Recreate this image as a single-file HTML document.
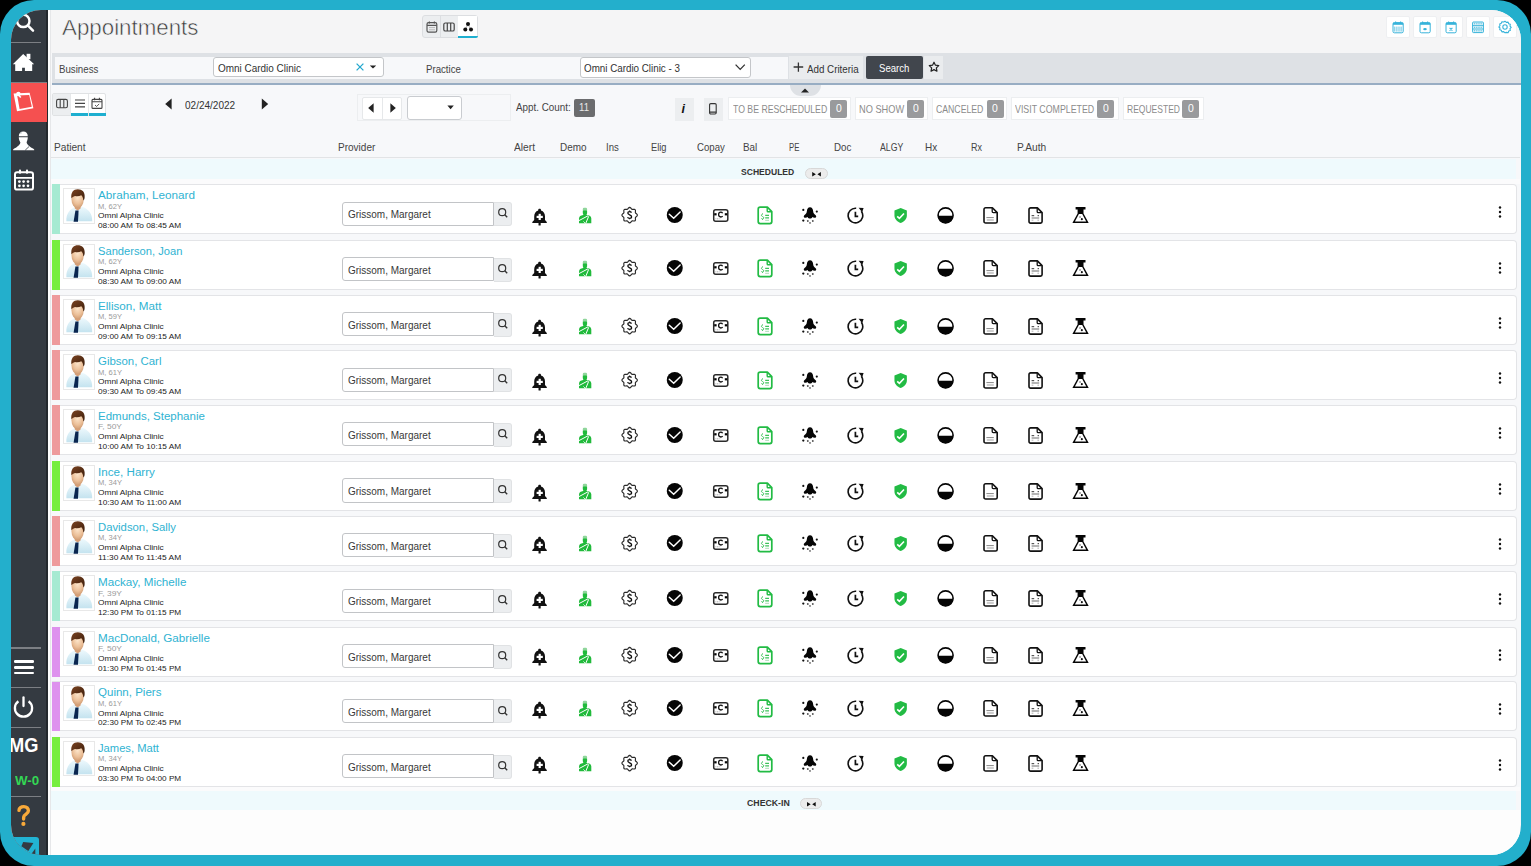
<!DOCTYPE html><html><head><meta charset="utf-8"><style>html,body{margin:0;padding:0}body{width:1531px;height:866px;overflow:hidden;position:relative;background:#000;font-family:"Liberation Sans", sans-serif}</style></head><body><div style="position:absolute;left:0px;top:0px;width:1531px;height:866px;background:#23afcc;border-radius:34px"></div><div style="position:absolute;left:11px;top:10.4px;width:1509.5px;height:845px;border-radius:30px;overflow:hidden;background:#f7f8fa"><div style="position:absolute;left:-11px;top:-10.4px;width:1531px;height:866px"><div style="position:absolute;left:47px;top:0px;width:1484px;height:53px;background:#f5f5f6"></div><div style="position:absolute;left:47px;top:0px;width:3px;height:866px;background:#fdfdfd"></div><div style="position:absolute;left:50.0px;top:0px;width:1px;height:866px;background:#e6e7e9"></div><div style="position:absolute;left:0px;top:0px;width:46.3px;height:866px;background:#343a41"></div><div style="position:absolute;left:46.3px;top:0px;width:1.7px;height:866px;background:#23282d"></div><svg style="position:absolute;left:13px;top:9px" width="24" height="26" viewBox="0 0 24 26"><circle cx="10.3" cy="11.9" r="6.2" fill="none" stroke="#fff" stroke-width="2.5"/><path d="M15 16.6l5 5" stroke="#fff" stroke-width="2.5" stroke-linecap="round"/></svg><div style="position:absolute;left:11px;top:42px;width:30px;height:1.4px;background:#7c7f84"></div><svg style="position:absolute;left:12px;top:53px" width="24" height="19" viewBox="0 0 24 19"><path d="M11.2 .9L22.2 11.3H20.2V17.9H12.9V14.7H10.1V17.9H3.2V11.3H.8z" fill="#fff"/><rect x="14.6" y=".8" width="3.8" height="5.4" fill="#fff"/></svg><div style="position:absolute;left:11px;top:82.2px;width:36px;height:1.2px;background:#7c7f84"></div><div style="position:absolute;left:11px;top:83.2px;width:36px;height:39px;background:#f55050"></div><svg style="position:absolute;left:11px;top:88px" width="26" height="28" viewBox="0 0 26 28"><path d="M2.6 5.6l16-.8 3.8 15.4-16.4 3z" fill="#fff"/><path d="M6.2 7.6l12-.6 2.6 11.8-12.2 2.2z" fill="#f55050"/><circle cx="7.4" cy="6" r="2.2" fill="#fff"/><path d="M7.2 6.6l2.6 3" stroke="#fff" stroke-width="1.6"/></svg><svg style="position:absolute;left:12px;top:131px" width="23" height="21" viewBox="0 0 23 21"><path d="M6.8 5.3C6.8 2.4 8.6.6 11.3.6s4.5 1.8 4.5 4.7z" fill="#fff"/><path d="M6.8 6.3h9c0 2.3-.8 3.7-1.2 5.3.6 3 4.8 5 7.6 6.8v.9H1.1v-.9c2.9-1.8 6.9-3.8 7.3-6.8-.8-1.6-1.6-3-1.6-5.3z" fill="#fff"/><path d="M13.2 19.2l4-3.8" stroke="#343a41" stroke-width=".8"/><path d="M8.4 2.6l1.6-1" stroke="#9aa" stroke-width=".6"/></svg><svg style="position:absolute;left:13px;top:169px" width="22" height="23" viewBox="0 0 22 23"><rect x="2" y="3.2" width="18" height="17.4" rx="2.2" fill="none" stroke="#fff" stroke-width="2"/><path d="M2 8.8h18" stroke="#fff" stroke-width="1.8"/><rect x="6" y=".6" width="2" height="4.2" rx=".8" fill="#fff"/><rect x="13" y=".6" width="2" height="4.2" rx=".8" fill="#fff"/><circle cx="6.4" cy="12.6" r="1.35" fill="#fff"/><circle cx="6.4" cy="16.8" r="1.35" fill="#fff"/><circle cx="10.6" cy="12.6" r="1.35" fill="#fff"/><circle cx="10.6" cy="16.8" r="1.35" fill="#fff"/><circle cx="15.0" cy="12.6" r="1.35" fill="#fff"/><circle cx="15.0" cy="16.8" r="1.35" fill="#fff"/></svg><div style="position:absolute;left:11px;top:647.4px;width:30px;height:1.4px;background:#7c7f84"></div><div style="position:absolute;left:13.5px;top:660.3px;width:20.5px;height:2.3px;background:#fff;border-radius:1.2px"></div><div style="position:absolute;left:13.5px;top:666.3px;width:20.5px;height:2.3px;background:#fff;border-radius:1.2px"></div><div style="position:absolute;left:13.5px;top:672.1px;width:20.5px;height:2.3px;background:#fff;border-radius:1.2px"></div><div style="position:absolute;left:11px;top:687px;width:30px;height:1.4px;background:#7c7f84"></div><svg style="position:absolute;left:12px;top:695px" width="23" height="24" viewBox="0 0 23 24"><path d="M6.4 6.2a8.6 8.6 0 1 0 10.2 0" fill="none" stroke="#fff" stroke-width="2.3"/><path d="M11.5 2.4v8.6" stroke="#fff" stroke-width="2.3" stroke-linecap="round"/></svg><div style="position:absolute;left:11px;top:726.7px;width:30px;height:1.4px;background:#7c7f84"></div><div style="position:absolute;left:9.4px;top:735.92px;font-size:19.6px;line-height:19.6px;color:#fff;font-weight:700;white-space:nowrap;transform:scaleX(0.9312);transform-origin:0 0;">MG</div><div style="position:absolute;left:15.2px;top:773.84px;font-size:13.2px;line-height:13.2px;color:#33d654;font-weight:700;white-space:nowrap;transform:scaleX(1.0112);transform-origin:0 0;">W-0</div><div style="position:absolute;left:11px;top:795.6px;width:30px;height:1.4px;background:#7c7f84"></div><svg style="position:absolute;left:10px;top:800px" width="30" height="30" viewBox="0 0 30 30"><path d="M9 10.4C9 8 11.2 6.6 13.8 6.6 16.6 6.6 18.4 8.4 18.4 10.8 18.4 13.6 15.6 14.2 14.2 15.8 13.6 16.6 13.6 17.6 13.6 19" fill="none" stroke="#f8a93a" stroke-width="3.4" stroke-linecap="round"/><circle cx="13.4" cy="23.9" r="2.1" fill="#f8a93a"/></svg><div style="position:absolute;left:0px;top:837.1px;width:38.5px;height:30px;background:#22b3d3;border-radius:0 3px 0 0"></div><svg style="position:absolute;left:0px;top:830px" width="40" height="36" viewBox="0 0 40 36"><path d="M21.4 16.3L23.2 12 33.4 13.1 28.3 21z" fill="#343a41"/><path d="M31.6 23.7L35.3 18.6V24z" fill="#343a41"/></svg><div style="position:absolute;left:61.8px;top:17.38px;font-size:22.3px;line-height:22.3px;color:#383838;font-weight:400;white-space:nowrap;transform:scaleX(1.0010);transform-origin:0 0;-webkit-text-stroke:0.55px #f5f5f6">Appointments</div><div style="position:absolute;left:422px;top:15.3px;width:55.6px;height:23.2px;background:#eceef0;border:1px solid #dcdee1;box-sizing:border-box;border-radius:3px"></div><div style="position:absolute;left:440.4px;top:16.3px;width:0.8px;height:21.2px;background:#dcdee1"></div><div style="position:absolute;left:458.3px;top:16.3px;width:18.3px;height:19.5px;background:#fff"></div><div style="position:absolute;left:458.3px;top:35.6px;width:19.3px;height:2.8px;background:#1eafd0;border-radius:0 0 3px 0"></div><svg style="position:absolute;left:423.5px;top:19px" width="16" height="16" viewBox="0 0 16 16"><rect x="3" y="3.6" width="9.8" height="9.6" rx="1.6" fill="none" stroke="#555" stroke-width="1.2"/><path d="M3 6.4h9.8" stroke="#555" stroke-width="1.2"/><path d="M5.4 2.6v1.8M10.4 2.6v1.8" stroke="#555" stroke-width="1.2"/><path d="M5 8.6h6M5 10.8h6" stroke="#aaa" stroke-width=".8"/></svg><svg style="position:absolute;left:441.2px;top:19px" width="16" height="16" viewBox="0 0 16 16"><rect x="2.8" y="4" width="10.4" height="8" rx="1.6" fill="none" stroke="#444" stroke-width="1.2"/><path d="M6.3 4v8M9.7 4v8" stroke="#444" stroke-width="1.2"/></svg><svg style="position:absolute;left:459.5px;top:17px" width="16" height="18" viewBox="0 0 16 18"><path d="M8 7L5.3 12.6M8 7l2.7 5.6" stroke="#999" stroke-width=".7"/><circle cx="8" cy="7.1" r="2" fill="#111"/><circle cx="5.3" cy="12.6" r="2" fill="#111"/><circle cx="11" cy="12.6" r="2" fill="#111"/></svg><div style="position:absolute;left:1385.9px;top:15.5px;width:23.799999999999955px;height:22.8px;background:#fff;border:1px solid #eeeff1;box-sizing:border-box;border-radius:2px"></div><div style="position:absolute;left:1412.9px;top:15.5px;width:23.799999999999955px;height:22.8px;background:#fff;border:1px solid #eeeff1;box-sizing:border-box;border-radius:2px"></div><div style="position:absolute;left:1439.9px;top:15.5px;width:22.799999999999955px;height:22.8px;background:#fff;border:1px solid #eeeff1;box-sizing:border-box;border-radius:2px"></div><div style="position:absolute;left:1466.4px;top:15.5px;width:23.299999999999955px;height:22.8px;background:#fff;border:1px solid #eeeff1;box-sizing:border-box;border-radius:2px"></div><div style="position:absolute;left:1492.9px;top:15.5px;width:24.09999999999991px;height:22.8px;background:#fff;border:1px solid #eeeff1;box-sizing:border-box;border-radius:2px"></div><svg style="position:absolute;left:1387.8px;top:17px" width="20" height="20" viewBox="0 0 20 20"><rect x="5" y="5.6" width="10.2" height="10.2" rx="1.4" fill="none" stroke="#37b3da" stroke-width="1"/><rect x="5" y="5.6" width="10.2" height="2.2" fill="#37b3da"/><path d="M7.6 4.4v2.2M12.6 4.4v2.2" stroke="#37b3da" stroke-width="1.1"/><path d="M6.8 9.6v5" stroke="#37b3da" stroke-width=".8"/><path d="M8.9 9.6v5" stroke="#37b3da" stroke-width=".8"/><path d="M11.0 9.6v5" stroke="#37b3da" stroke-width=".8"/><path d="M13.100000000000001 9.6v5" stroke="#37b3da" stroke-width=".8"/></svg><svg style="position:absolute;left:1414.8px;top:17px" width="20" height="20" viewBox="0 0 20 20"><rect x="5" y="5.6" width="10.2" height="10.2" rx="1.4" fill="none" stroke="#37b3da" stroke-width="1"/><rect x="5" y="5.6" width="10.2" height="2.2" fill="#37b3da"/><path d="M7.6 4.4v2.2M12.6 4.4v2.2" stroke="#37b3da" stroke-width="1.1"/><ellipse cx="10" cy="12.2" rx="1.8" ry="1.1" fill="#37b3da"/></svg><svg style="position:absolute;left:1441.3px;top:17px" width="20" height="20" viewBox="0 0 20 20"><rect x="5" y="5.6" width="10.2" height="10.2" rx="1.4" fill="none" stroke="#37b3da" stroke-width="1"/><rect x="5" y="5.6" width="10.2" height="2.2" fill="#37b3da"/><path d="M7.6 4.4v2.2M12.6 4.4v2.2" stroke="#37b3da" stroke-width="1.1"/><path d="M8.6 10.8l2.8 2.8M11.4 10.8l-2.8 2.8" stroke="#37b3da" stroke-width="1.1"/></svg><svg style="position:absolute;left:1468.0px;top:17px" width="20" height="20" viewBox="0 0 20 20"><rect x="4.6" y="5" width="10.8" height="10.6" rx=".8" fill="#e3f4fa" stroke="#37b3da" stroke-width="1"/><path d="M4.6 8.6h10.8M4.6 12h10.8" stroke="#37b3da" stroke-width=".9"/><path d="M6 6.8h8M6 10.3h8M6 13.8h8" stroke="#37b3da" stroke-width=".9" stroke-dasharray="1.2 1"/></svg><svg style="position:absolute;left:1495.0px;top:17px" width="20" height="20" viewBox="0 0 20 20"><path d="M10 4.2l1.3 1.2 1.8-.3.6 1.6 1.6.6-.3 1.8 1.2 1.3-1.2 1.3.3 1.8-1.6.6-.6 1.6-1.8-.3L10 15.8l-1.3-1.2-1.8.3-.6-1.6-1.6-.6.3-1.8L3.8 10l1.2-1.3-.3-1.8 1.6-.6.6-1.6 1.8.3z" fill="none" stroke="#37b3da" stroke-width="1.1" stroke-linejoin="round"/><circle cx="10" cy="10" r="2.2" fill="none" stroke="#37b3da" stroke-width="1.1"/></svg><div style="position:absolute;left:52px;top:53.3px;width:1475px;height:29.8px;background:#dee1e5"></div><div style="position:absolute;left:52px;top:83.0px;width:1475px;height:2.1px;background:#98adc3"></div><div style="position:absolute;left:55px;top:56.6px;width:733.3px;height:22px;background:#f7f8fa"></div><div style="position:absolute;left:59px;top:64.76px;font-size:10.4px;line-height:10.4px;color:#444;font-weight:400;white-space:nowrap;transform:scaleX(0.9336);transform-origin:0 0;">Business</div><div style="position:absolute;left:425.9px;top:64.96px;font-size:10.4px;line-height:10.4px;color:#444;font-weight:400;white-space:nowrap;transform:scaleX(0.9290);transform-origin:0 0;">Practice</div><div style="position:absolute;left:212.7px;top:57.4px;width:171.6px;height:20px;background:#fff;border:1px solid #c4c6c9;border-radius:3px;box-sizing:border-box"></div><div style="position:absolute;left:218px;top:63.20px;font-size:10.6px;line-height:10.6px;color:#333;font-weight:400;white-space:nowrap;transform:scaleX(0.9394);transform-origin:0 0;">Omni Cardio Clinic</div><svg style="position:absolute;left:354px;top:61px" width="12" height="12" viewBox="0 0 12 12"><path d="M2.6 2.6l6.8 6.8M9.4 2.6l-6.8 6.8" stroke="#27a9cf" stroke-width="1.3"/></svg><svg style="position:absolute;left:368px;top:61px" width="10" height="12" viewBox="0 0 10 12"><path d="M1.8 4.4h6.4L5 7.6z" fill="#222"/></svg><div style="position:absolute;left:579.6px;top:57px;width:171px;height:21px;background:#fff;border:1px solid #c4c6c9;border-radius:3px;box-sizing:border-box"></div><div style="position:absolute;left:584px;top:63.40px;font-size:10.6px;line-height:10.6px;color:#333;font-weight:400;white-space:nowrap;transform:scaleX(0.9260);transform-origin:0 0;">Omni Cardio Clinic - 3</div><svg style="position:absolute;left:733px;top:61px" width="14" height="12" viewBox="0 0 14 12"><path d="M2.6 3.6l4.6 4.8 4.6-4.8" fill="none" stroke="#333" stroke-width="1.3"/></svg><div style="position:absolute;left:789.4px;top:56.2px;width:74px;height:22.6px;background:#eaecee"></div><svg style="position:absolute;left:792px;top:61px" width="12" height="12" viewBox="0 0 12 12"><path d="M6.4 1.4v9.4M1.6 6h9.6" stroke="#333" stroke-width="1.3"/></svg><div style="position:absolute;left:806.7px;top:64.96px;font-size:10.4px;line-height:10.4px;color:#333;font-weight:400;white-space:nowrap;transform:scaleX(0.9415);transform-origin:0 0;">Add Criteria</div><div style="position:absolute;left:866px;top:56px;width:57px;height:23.2px;background:#41464d;border-radius:2px"></div><div style="position:absolute;left:879px;top:64.36px;font-size:10.4px;line-height:10.4px;color:#fff;font-weight:400;white-space:nowrap;transform:scaleX(0.9225);transform-origin:0 0;">Search</div><div style="position:absolute;left:924.4px;top:56.2px;width:19px;height:22.6px;background:#eaecee"></div><svg style="position:absolute;left:927.9px;top:60.8px" width="12" height="12" viewBox="0 0 12 12"><path d="M6 1.2l1.45 3 3.3.4-2.4 2.3.6 3.3L6 8.6l-2.95 1.6.6-3.3L1.25 4.6l3.3-.4z" fill="none" stroke="#222" stroke-width="1.2" stroke-linejoin="round"/></svg><div style="position:absolute;left:790px;top:85px;width:31px;height:10.5px;background:#dee1e5;border-radius:0 0 12px 12px"></div><svg style="position:absolute;left:799px;top:85px" width="12" height="10" viewBox="0 0 12 10"><path d="M2 7.4h8L6 3.4z" fill="#222"/></svg><div style="position:absolute;left:52px;top:92.6px;width:54px;height:23.4px;background:#fff;border:1px solid #e0e2e4;box-sizing:border-box;border-radius:2px"></div><div style="position:absolute;left:53px;top:93.6px;width:17.3px;height:21.4px;background:#eceef0"></div><div style="position:absolute;left:70.3px;top:93.6px;width:0.8px;height:21.4px;background:#e6e8ea"></div><div style="position:absolute;left:88.0px;top:93.6px;width:0.8px;height:21.4px;background:#e6e8ea"></div><div style="position:absolute;left:70.9px;top:113.4px;width:17.1px;height:2.6px;background:#1eafd0"></div><div style="position:absolute;left:88.8px;top:113.4px;width:17.1px;height:2.6px;background:#1eafd0"></div><svg style="position:absolute;left:53.5px;top:95px" width="16" height="16" viewBox="0 0 16 16"><rect x="2.6" y="4.4" width="10.8" height="8.4" rx="1.6" fill="none" stroke="#444" stroke-width="1.1"/><path d="M6.2 4.4v8.4M9.8 4.4v8.4" stroke="#444" stroke-width="1.1"/></svg><svg style="position:absolute;left:71.5px;top:95px" width="16" height="16" viewBox="0 0 16 16"><path d="M3 5h10M3 8.4h10M3 11.8h10" stroke="#444" stroke-width="1.2"/></svg><svg style="position:absolute;left:89px;top:95px" width="16" height="16" viewBox="0 0 16 16"><rect x="3" y="4.4" width="10" height="9" rx="1" fill="none" stroke="#444" stroke-width="1.1"/><path d="M3 6.8h10M5.6 2.8v2.4M10.4 2.8v2.4" stroke="#444" stroke-width="1.1"/><path d="M6 10l1.6 1.5 2.6-2.6" fill="none" stroke="#444" stroke-width=".9"/></svg><svg style="position:absolute;left:163px;top:97px" width="10" height="14" viewBox="0 0 10 14"><path d="M8.6 1.6v10.8L2.2 7z" fill="#222"/></svg><div style="position:absolute;left:184.6px;top:99.80px;font-size:10.6px;line-height:10.6px;color:#333;font-weight:400;white-space:nowrap;transform:scaleX(0.9462);transform-origin:0 0;">02/24/2022</div><svg style="position:absolute;left:260px;top:97px" width="10" height="14" viewBox="0 0 10 14"><path d="M1.8 1.6v10.8L8.2 7z" fill="#222"/></svg><div style="position:absolute;left:356.7px;top:94.2px;width:154.1px;height:27px;background:#f7f8fa;border:1px solid #eceef0;box-sizing:border-box"></div><div style="position:absolute;left:361.5px;top:96.5px;width:40.5px;height:23px;background:#fff;border:1px solid #e6e8ea;box-sizing:border-box;border-radius:2px"></div><div style="position:absolute;left:381.6px;top:96.5px;width:1px;height:23px;background:#e6e8ea"></div><svg style="position:absolute;left:366px;top:101px" width="10" height="14" viewBox="0 0 10 14"><path d="M7.6 2.2v9.6L2.2 7z" fill="#222"/></svg><svg style="position:absolute;left:387.5px;top:101px" width="10" height="14" viewBox="0 0 10 14"><path d="M2.4 2.2v9.6L7.8 7z" fill="#222"/></svg><div style="position:absolute;left:406.8px;top:96.2px;width:55.4px;height:23.4px;background:#fff;border:1px solid #c9ccd0;border-radius:3px;box-sizing:border-box"></div><svg style="position:absolute;left:445px;top:102px" width="12" height="10" viewBox="0 0 12 10"><path d="M2.4 3.6h6.4L5.6 7.2z" fill="#222"/></svg><div style="position:absolute;left:515.8px;top:102.76px;font-size:10.4px;line-height:10.4px;color:#444;font-weight:400;white-space:nowrap;transform:scaleX(0.9461);transform-origin:0 0;">Appt. Count:</div><div style="position:absolute;left:573.6px;top:99px;width:21.4px;height:17.6px;background:#6b6c6e;border-radius:2px"></div><div style="position:absolute;left:579.2px;top:103.36px;font-size:10.4px;line-height:10.4px;color:#e8e8e8;font-weight:400;white-space:nowrap;transform:scaleX(0.9262);transform-origin:0 0;">11</div><div style="position:absolute;left:675.3px;top:97.5px;width:18.4px;height:23.5px;background:#eceef0"></div><div style="position:absolute;left:681.4px;top:103.02px;font-size:12.5px;line-height:12.5px;color:#111;font-weight:700;white-space:nowrap;font-style:italic;font-family:"Liberation Serif",serif">i</div><div style="position:absolute;left:703.5px;top:97.5px;width:19px;height:23.5px;background:#eceef0"></div><svg style="position:absolute;left:707px;top:101px" width="12" height="16" viewBox="0 0 12 16"><rect x="2.6" y="2.6" width="6.6" height="10.4" rx="1.2" fill="none" stroke="#333" stroke-width="1.1"/><path d="M2.6 11.2h6.6" stroke="#333" stroke-width="1.2"/></svg><div style="position:absolute;left:727.6px;top:96.8px;width:123.39999999999998px;height:22.8px;background:#fff;border:1px solid #eceef0;box-sizing:border-box"></div><div style="position:absolute;left:732.5px;top:103.93px;font-size:10.8px;line-height:10.8px;color:#8c8c8c;font-weight:400;white-space:nowrap;transform:scaleX(0.8063);transform-origin:0 0;">TO BE RESCHEDULED</div><div style="position:absolute;left:830.0px;top:99.8px;width:17px;height:17.8px;background:#999a9c;border-radius:2px"></div><div style="position:absolute;left:835.6px;top:103.96px;font-size:10.4px;line-height:10.4px;color:#fff;font-weight:400;white-space:nowrap;transform:scaleX(1.0027);transform-origin:0 0;">0</div><div style="position:absolute;left:854.5px;top:96.8px;width:73.5px;height:22.8px;background:#fff;border:1px solid #eceef0;box-sizing:border-box"></div><div style="position:absolute;left:859.0px;top:103.93px;font-size:10.8px;line-height:10.8px;color:#8c8c8c;font-weight:400;white-space:nowrap;transform:scaleX(0.8542);transform-origin:0 0;">NO SHOW</div><div style="position:absolute;left:907.0px;top:99.8px;width:17px;height:17.8px;background:#999a9c;border-radius:2px"></div><div style="position:absolute;left:912.6px;top:103.96px;font-size:10.4px;line-height:10.4px;color:#fff;font-weight:400;white-space:nowrap;transform:scaleX(1.0027);transform-origin:0 0;">0</div><div style="position:absolute;left:931.7px;top:96.8px;width:75.79999999999995px;height:22.8px;background:#fff;border:1px solid #eceef0;box-sizing:border-box"></div><div style="position:absolute;left:936.1px;top:103.93px;font-size:10.8px;line-height:10.8px;color:#8c8c8c;font-weight:400;white-space:nowrap;transform:scaleX(0.8059);transform-origin:0 0;">CANCELED</div><div style="position:absolute;left:986.7px;top:99.8px;width:17px;height:17.8px;background:#999a9c;border-radius:2px"></div><div style="position:absolute;left:992.3000000000001px;top:103.96px;font-size:10.4px;line-height:10.4px;color:#fff;font-weight:400;white-space:nowrap;transform:scaleX(1.0027);transform-origin:0 0;">0</div><div style="position:absolute;left:1010.5px;top:96.8px;width:108.40000000000009px;height:22.8px;background:#fff;border:1px solid #eceef0;box-sizing:border-box"></div><div style="position:absolute;left:1015.1px;top:103.93px;font-size:10.8px;line-height:10.8px;color:#8c8c8c;font-weight:400;white-space:nowrap;transform:scaleX(0.8163);transform-origin:0 0;">VISIT COMPLETED</div><div style="position:absolute;left:1097.1px;top:99.8px;width:17px;height:17.8px;background:#999a9c;border-radius:2px"></div><div style="position:absolute;left:1102.6999999999998px;top:103.96px;font-size:10.4px;line-height:10.4px;color:#fff;font-weight:400;white-space:nowrap;transform:scaleX(1.0027);transform-origin:0 0;">0</div><div style="position:absolute;left:1122.7px;top:96.8px;width:81.39999999999986px;height:22.8px;background:#fff;border:1px solid #eceef0;box-sizing:border-box"></div><div style="position:absolute;left:1126.5px;top:103.93px;font-size:10.8px;line-height:10.8px;color:#8c8c8c;font-weight:400;white-space:nowrap;transform:scaleX(0.7885);transform-origin:0 0;">REQUESTED</div><div style="position:absolute;left:1182.4px;top:99.8px;width:17px;height:17.8px;background:#999a9c;border-radius:2px"></div><div style="position:absolute;left:1188.0px;top:103.96px;font-size:10.4px;line-height:10.4px;color:#fff;font-weight:400;white-space:nowrap;transform:scaleX(1.0027);transform-origin:0 0;">0</div><div style="position:absolute;left:51.3px;top:157px;width:1469px;height:1px;background:#e2e4e6"></div><div style="position:absolute;left:54.4px;top:142.30px;font-size:10.6px;line-height:10.6px;color:#444;font-weight:400;white-space:nowrap;transform:scaleX(0.9575);transform-origin:0 0;">Patient</div><div style="position:absolute;left:337.7px;top:142.30px;font-size:10.6px;line-height:10.6px;color:#444;font-weight:400;white-space:nowrap;transform:scaleX(0.9450);transform-origin:0 0;">Provider</div><div style="position:absolute;left:514.1px;top:142.30px;font-size:10.6px;line-height:10.6px;color:#444;font-weight:400;white-space:nowrap;transform:scaleX(0.9681);transform-origin:0 0;">Alert</div><div style="position:absolute;left:559.9px;top:142.30px;font-size:10.6px;line-height:10.6px;color:#444;font-weight:400;white-space:nowrap;transform:scaleX(0.9372);transform-origin:0 0;">Demo</div><div style="position:absolute;left:605.6px;top:142.30px;font-size:10.6px;line-height:10.6px;color:#444;font-weight:400;white-space:nowrap;transform:scaleX(0.9052);transform-origin:0 0;">Ins</div><div style="position:absolute;left:651.3px;top:142.30px;font-size:10.6px;line-height:10.6px;color:#444;font-weight:400;white-space:nowrap;transform:scaleX(0.8769);transform-origin:0 0;">Elig</div><div style="position:absolute;left:696.7px;top:142.30px;font-size:10.6px;line-height:10.6px;color:#444;font-weight:400;white-space:nowrap;transform:scaleX(0.9073);transform-origin:0 0;">Copay</div><div style="position:absolute;left:742.7px;top:142.30px;font-size:10.6px;line-height:10.6px;color:#444;font-weight:400;white-space:nowrap;transform:scaleX(0.9334);transform-origin:0 0;">Bal</div><div style="position:absolute;left:788.8px;top:142.30px;font-size:10.6px;line-height:10.6px;color:#444;font-weight:400;white-space:nowrap;transform:scaleX(0.7354);transform-origin:0 0;">PE</div><div style="position:absolute;left:834.0px;top:142.30px;font-size:10.6px;line-height:10.6px;color:#444;font-weight:400;white-space:nowrap;transform:scaleX(0.9177);transform-origin:0 0;">Doc</div><div style="position:absolute;left:879.7px;top:142.30px;font-size:10.6px;line-height:10.6px;color:#444;font-weight:400;white-space:nowrap;transform:scaleX(0.8203);transform-origin:0 0;">ALGY</div><div style="position:absolute;left:925.4px;top:142.30px;font-size:10.6px;line-height:10.6px;color:#444;font-weight:400;white-space:nowrap;transform:scaleX(0.9417);transform-origin:0 0;">Hx</div><div style="position:absolute;left:971.1px;top:142.30px;font-size:10.6px;line-height:10.6px;color:#444;font-weight:400;white-space:nowrap;transform:scaleX(0.8491);transform-origin:0 0;">Rx</div><div style="position:absolute;left:1016.8px;top:142.30px;font-size:10.6px;line-height:10.6px;color:#444;font-weight:400;white-space:nowrap;transform:scaleX(0.9621);transform-origin:0 0;">P.Auth</div><div style="position:absolute;left:51.3px;top:158.6px;width:1464.7px;height:20px;background:#effafd"></div><div style="position:absolute;left:51.3px;top:178.6px;width:1469px;height:5.6px;background:#fbfbfc"></div><div style="position:absolute;left:741.4px;top:167.23px;font-size:9.6px;line-height:9.6px;color:#333;font-weight:700;white-space:nowrap;transform:scaleX(0.8922);transform-origin:0 0;">SCHEDULED</div><div style="position:absolute;left:805.2px;top:167.5px;width:22.4px;height:11px;background:#ececec;border:1px solid #d8d8d8;border-radius:6px;box-sizing:border-box"></div><svg style="position:absolute;left:805.2px;top:167.5px" width="22.4" height="11" viewBox="0 0 22.4 11"><path d="M7.2 4v4.4L10.9 6.2zM15.9 4v4.4L12.4 6.2z" fill="#111"/></svg><div style="position:absolute;left:52px;top:184.1px;width:1464.6px;height:50.1px;background:#fff;border:1.5px solid #e3e4e7;border-left:none;border-radius:0 4px 4px 0;box-sizing:border-box"></div><div style="position:absolute;left:52px;top:184.4px;width:8px;height:49.5px;background:#a6ead2"></div><div style="position:absolute;left:63.2px;top:188.20000000000002px;width:31.6px;height:35.5px;border:1px solid #e8e8e8;box-sizing:border-box;background:#fff"></div><svg style="position:absolute;left:64.60000000000001px;top:189.20000000000002px" width="29" height="34" viewBox="0 0 29 34"><defs><radialGradient id="sk" cx="0.5" cy="0.35" r="0.75"><stop offset="0" stop-color="#fde6cc"/><stop offset="0.55" stop-color="#ebbf98"/><stop offset="1" stop-color="#c48c62"/></radialGradient><linearGradient id="sh" x1="0" y1="0" x2="0" y2="1"><stop offset="0" stop-color="#eef9fd"/><stop offset="1" stop-color="#c4e3ef"/></linearGradient><linearGradient id="hr" x1="0" y1="0" x2="1" y2="1"><stop offset="0" stop-color="#7a4322"/><stop offset="1" stop-color="#3c1d0a"/></linearGradient></defs><path d="M1.4 32.2c-.4-7.4 3.4-12.2 9.2-14.4l3 1 3.4-1c6.2 2 10.6 6.6 10.2 14.4z" fill="url(#sh)"/><path d="M9.8 15.6h5.8v4l-2.9 2-2.9-2z" fill="#d7a078"/><ellipse cx="12.6" cy="10.6" rx="6.1" ry="8.6" fill="url(#sk)"/><path d="M6.4 9.6C5.6 3.4 8.4.3 12.8.3c4.4 0 7.4 2.8 6.8 8.4-.2 1.4-.6 2.2-1.2 2.8-.2-2.6-1-4.4-2.2-5.2-1.8 1-4.2 1.2-6.2.6-1.6.4-3 1.4-3.6 2.7z" fill="url(#hr)"/><path d="M10.4 21.6h3.2l-.6 11.2H8.6z" fill="#0a2650"/></svg><div style="position:absolute;left:98px;top:188.98px;font-size:11.7px;line-height:11.7px;color:#2fb3d2;font-weight:400;white-space:nowrap;transform:scaleX(1.0009);transform-origin:0 0;">Abraham, Leonard</div><div style="position:absolute;left:98px;top:202.55px;font-size:7.4px;line-height:7.4px;color:#9a9a9a;font-weight:400;white-space:nowrap;transform:scaleX(1.0237);transform-origin:0 0;">M, 62Y</div><div style="position:absolute;left:98px;top:212.49px;font-size:7.6px;line-height:7.6px;color:#222;font-weight:400;white-space:nowrap;transform:scaleX(1.0970);transform-origin:0 0;">Omni Alpha Clinic</div><div style="position:absolute;left:98px;top:221.94px;font-size:7.9px;line-height:7.9px;color:#222;font-weight:400;white-space:nowrap;transform:scaleX(1.0498);transform-origin:0 0;">08:00 AM To 08:45 AM</div><div style="position:absolute;left:342.4px;top:201.5px;width:152px;height:24.2px;background:#fff;border:1px solid #c2c4c7;border-radius:3px 0 0 3px;box-sizing:border-box"></div><div style="position:absolute;left:494.3px;top:201.9px;width:18px;height:24.4px;background:#eceef0;border:1px solid #e0e2e4;border-left:none;border-radius:0 3px 3px 0;box-sizing:border-box"></div><div style="position:absolute;left:347.6px;top:209.43px;font-size:10.8px;line-height:10.8px;color:#383838;font-weight:400;white-space:nowrap;transform:scaleX(0.9249);transform-origin:0 0;">Grissom, Margaret</div><svg style="position:absolute;left:497px;top:207.3px" width="12" height="12" viewBox="0 0 12 12"><circle cx="5.2" cy="5.2" r="3.5" fill="none" stroke="#333" stroke-width="1.2"/><path d="M7.8 7.8l2.4 2.4" stroke="#333" stroke-width="1.4"/></svg><svg style="position:absolute;left:531.0px;top:206.05px" width="18" height="20" viewBox="0 0 18 20"><path d="M8.6 2.7c.8 0 1.4.5 1.4 1.2v.6c2.6.7 4 3 4 6v3.4l1.8 2.2V17H1.3v-.9l1.9-2.2v-3.4c0-3 1.4-5.3 4-6v-.6c0-.7.6-1.2 1.4-1.2z" fill="#111"/><rect x="7.6" y="7.8" width="2.2" height="6.2" fill="#fff"/><rect x="5.6" y="9.8" width="6.2" height="2.2" fill="#fff"/><rect x="7.5" y="17" width="2.2" height="2.5" rx=".6" fill="#111"/></svg><svg style="position:absolute;left:576.08px;top:206.05px" width="18" height="20" viewBox="0 0 18 20"><rect x="6.8" y="1.8" width="4.3" height="3.3" rx="1.3" fill="#8fd69b"/><path d="M6.8 4.6h4.3v2.3c0 1-.4 1.7-.9 2.3H7.7c-.5-.6-.9-1.3-.9-2.3z" fill="#20ba3b"/><path d="M7.2 9c-2.6.3-4.2 1.5-4.2 3.5v4.7h12.3v-4.7c0-2-1.6-3.2-4.2-3.5z" fill="#20ba3b"/><path d="M2.8 14.7l9.2-4.9" stroke="#fff" stroke-width="1"/><path d="M12.7 10.3l-3 7.2" stroke="#fff" stroke-width="1"/><path d="M7.4 15.4l2 2" stroke="#fff" stroke-width=".8"/></svg><svg style="position:absolute;left:621.16px;top:206.05px" width="18" height="20" viewBox="0 0 18 20"><polygon points="8.64,1.40 9.38,1.66 10.01,2.28 10.52,2.96 11.03,3.38 11.69,3.44 12.53,3.33 13.42,3.33 14.12,3.67 14.46,4.37 14.46,5.26 14.35,6.10 14.41,6.76 14.83,7.27 15.51,7.78 16.13,8.41 16.39,9.15 16.13,9.89 15.51,10.52 14.83,11.03 14.41,11.54 14.35,12.20 14.46,13.04 14.46,13.93 14.12,14.63 13.42,14.97 12.53,14.97 11.69,14.86 11.03,14.92 10.52,15.34 10.01,16.02 9.38,16.64 8.64,16.90 7.90,16.64 7.27,16.02 6.76,15.34 6.25,14.92 5.59,14.86 4.75,14.97 3.86,14.97 3.16,14.63 2.82,13.93 2.82,13.04 2.93,12.20 2.87,11.54 2.45,11.03 1.77,10.52 1.15,9.89 0.89,9.15 1.15,8.41 1.77,7.78 2.45,7.27 2.87,6.76 2.93,6.10 2.82,5.26 2.82,4.37 3.16,3.67 3.86,3.33 4.75,3.33 5.59,3.44 6.25,3.38 6.76,2.96 7.27,2.28 7.90,1.66" fill="none" stroke="#2a2a2a" stroke-width="1.15" stroke-linejoin="round"/><path d="M10.5 6.6c-.4-.7-1-1-1.9-1-1 0-1.8.6-1.8 1.5 0 2 3.8 1.4 3.8 3.6 0 1-.9 1.6-2 1.6-1 0-1.7-.4-2.1-1.1" fill="none" stroke="#111" stroke-width="1.3"/><path d="M8.6 4.6v1M8.6 12.3v1" stroke="#111" stroke-width="1.1"/></svg><svg style="position:absolute;left:666.24px;top:206.05px" width="18" height="20" viewBox="0 0 18 20"><circle cx="8.76" cy="9" r="8" fill="#050505"/><path d="M3.3 8.2l4.4 4.1 6.4-6.3" stroke="#fff" stroke-width="1.5" fill="none" stroke-linecap="round" stroke-linejoin="miter"/></svg><svg style="position:absolute;left:711.32px;top:206.05px" width="18" height="20" viewBox="0 0 18 20"><rect x="2.7" y="3.7" width="14.1" height="11.5" rx="2" fill="none" stroke="#2b2b2b" stroke-width="1.5"/><rect x="3.2" y="7.2" width="2.4" height="2.2" fill="#050505"/><rect x="13.8" y="7.2" width="2.4" height="2.2" fill="#050505"/><path d="M11.6 7.2c-.4-.7-1-1-1.8-1-1.3 0-2.2 1-2.2 2.4s.9 2.4 2.2 2.4c.8 0 1.4-.3 1.8-1" fill="none" stroke="#111" stroke-width="1.3"/><path d="M4.4 12.8h5" stroke="#9a9a9a" stroke-width=".8" stroke-dasharray="1 .6"/></svg><svg style="position:absolute;left:756.4px;top:206.05px" width="18" height="20" viewBox="0 0 18 20"><path d="M4.2 1.2h7.2l4.4 4.4v10c0 1.1-.9 2-2 2H4.2c-1.1 0-2-.9-2-2V3.2c0-1.1.9-2 2-2z" fill="none" stroke="#22bb44" stroke-width="1.7" stroke-linejoin="round"/><path d="M11.2 1.6v3.4c0 .5.3.8.8.8h3.4" fill="none" stroke="#22bb44" stroke-width="1.4"/><path d="M9.2 9.4h3.8M9.2 11.9h3.8" stroke="#3cc25a" stroke-width="1.1"/><path d="M9.2 14.3h3.8" stroke="#a9dcb4" stroke-width="1"/><path d="M6.6 8.2c-.6 0-1.2.4-1.2 1.1 0 1.4 2.4 1 2.4 2.6 0 .7-.6 1.1-1.2 1.1s-1.1-.3-1.3-.8M6.5 7.4v.8M6.5 13v.9" fill="none" stroke="#3cc25a" stroke-width=".9"/></svg><svg style="position:absolute;left:801.48px;top:206.05px" width="18" height="20" viewBox="0 0 18 20"><path d="M9 1.3C11 1.3 12 3.2 12.2 5.6 12.4 7.4 13.2 8.2 14.4 8.9 15.6 9.6 15.6 11.6 14 11.7 12.8 11.8 12 11.4 11.4 11 11 12.2 10 12.5 9 12.5S7 12.2 6.6 11C6 11.4 5.2 11.8 4 11.7 2.4 11.6 2.4 9.6 3.6 8.9 4.8 8.2 5.6 7.4 5.8 5.6 6 3.2 7 1.3 9 1.3z" fill="#050505"/><circle cx="2.3" cy="3.95" r="1.1" fill="#111"/><circle cx="15.8" cy="5.55" r="1.1" fill="#111"/><circle cx="2.3" cy="14.55" r="1.15" fill="#111"/><circle cx="6.8" cy="14.95" r=".95" fill="#555"/><circle cx="11.8" cy="14.95" r=".95" fill="#555"/><circle cx="9" cy="16.95" r=".9" fill="#666"/></svg><svg style="position:absolute;left:846.56px;top:206.05px" width="18" height="20" viewBox="0 0 18 20"><path d="M14.3 5.2A7.3 7.3 0 1 1 9.2 2.3" fill="none" stroke="#111" stroke-width="1.6"/><path d="M11.6 1.8l5 .1-1.4 4.4z" fill="#111"/><path d="M8.4 5.8v4.6h2.8" fill="none" stroke="#111" stroke-width="1.7"/></svg><svg style="position:absolute;left:891.64px;top:206.05px" width="18" height="20" viewBox="0 0 18 20"><path d="M8.66 2.1l6.2 2.3v4.8c0 3.8-2.6 6.6-6.2 7.8-3.6-1.2-6.2-4-6.2-7.8V4.4z" fill="#22bb44"/><path d="M5.2 10.3l2.2 2.1 4.6-4.9" stroke="#fff" stroke-width="1.6" fill="none"/></svg><svg style="position:absolute;left:936.72px;top:206.05px" width="18" height="20" viewBox="0 0 18 20"><circle cx="8.58" cy="9.35" r="7.5" fill="#fff" stroke="#050505" stroke-width="1.6"/><path d="M1.08 9.65h15a7.5 7.5 0 0 1-15 0z" fill="#050505"/></svg><svg style="position:absolute;left:981.8px;top:206.05px" width="18" height="20" viewBox="0 0 18 20"><path d="M3.6 1.8h6.8l4.8 4.8v8.8c0 .9-.7 1.6-1.6 1.6H3.6c-.9 0-1.6-.7-1.6-1.6V3.4c0-.9.7-1.6 1.6-1.6z" fill="none" stroke="#111" stroke-width="1.6" stroke-linejoin="round"/><path d="M10.2 2v3.6c0 .6.4 1 1 1h3.8" fill="none" stroke="#111" stroke-width="1.3"/><path d="M4.4 11.6h7.4" stroke="#888" stroke-width="1"/><path d="M4.8 14h7" stroke="#bbb" stroke-width="1.4"/></svg><svg style="position:absolute;left:1026.88px;top:206.05px" width="18" height="20" viewBox="0 0 18 20"><path d="M3.6 1.9h6.8l4.7 4.7v8.9c0 .9-.7 1.6-1.6 1.6H3.6c-.9 0-1.6-.7-1.6-1.6V3.5c0-.9.7-1.6 1.6-1.6z" fill="none" stroke="#111" stroke-width="1.6" stroke-linejoin="round"/><path d="M10.2 2.1v3.6c0 .6.4 1 1 1h3.7" fill="none" stroke="#111" stroke-width="1.3"/><path d="M4.6 9.7h2.6M10.6 9.7h1.4" stroke="#333" stroke-width="1"/><path d="M4.6 12h7.6" stroke="#777" stroke-width="1.1"/><path d="M4.6 14.2h1.8M10.4 14.2h1.6" stroke="#aaa" stroke-width=".9"/></svg><svg style="position:absolute;left:1071.96px;top:206.05px" width="18" height="20" viewBox="0 0 18 20"><path d="M3.6 1h9.9v2.4h-2v4l5.2 9.6H0.4l5.2-9.6v-4h-2z" fill="#050505"/><path d="M6.9 7.9L2.9 15.5h11.3l-4-7.6z" fill="#fff"/><circle cx="8.04" cy="10.95" r=".8" fill="#555"/><circle cx="9.84" cy="13.15" r="1.05" fill="#111"/></svg><svg style="position:absolute;left:1496.8px;top:204.95000000000002px" width="6" height="14" viewBox="0 0 6 14"><circle cx="3" cy="2.55" r="1.2" fill="#111"/><circle cx="3" cy="7" r="1.2" fill="#111"/><circle cx="3" cy="11.45" r="1.2" fill="#111"/></svg><div style="position:absolute;left:52px;top:239.7px;width:1464.6px;height:50.1px;background:#fff;border:1.5px solid #e3e4e7;border-left:none;border-radius:0 4px 4px 0;box-sizing:border-box"></div><div style="position:absolute;left:52px;top:240.0px;width:8px;height:49.5px;background:#76ee3e"></div><div style="position:absolute;left:63.2px;top:243.8px;width:31.6px;height:35.5px;border:1px solid #e8e8e8;box-sizing:border-box;background:#fff"></div><svg style="position:absolute;left:64.60000000000001px;top:244.8px" width="29" height="34" viewBox="0 0 29 34"><defs><radialGradient id="sk" cx="0.5" cy="0.35" r="0.75"><stop offset="0" stop-color="#fde6cc"/><stop offset="0.55" stop-color="#ebbf98"/><stop offset="1" stop-color="#c48c62"/></radialGradient><linearGradient id="sh" x1="0" y1="0" x2="0" y2="1"><stop offset="0" stop-color="#eef9fd"/><stop offset="1" stop-color="#c4e3ef"/></linearGradient><linearGradient id="hr" x1="0" y1="0" x2="1" y2="1"><stop offset="0" stop-color="#7a4322"/><stop offset="1" stop-color="#3c1d0a"/></linearGradient></defs><path d="M1.4 32.2c-.4-7.4 3.4-12.2 9.2-14.4l3 1 3.4-1c6.2 2 10.6 6.6 10.2 14.4z" fill="url(#sh)"/><path d="M9.8 15.6h5.8v4l-2.9 2-2.9-2z" fill="#d7a078"/><ellipse cx="12.6" cy="10.6" rx="6.1" ry="8.6" fill="url(#sk)"/><path d="M6.4 9.6C5.6 3.4 8.4.3 12.8.3c4.4 0 7.4 2.8 6.8 8.4-.2 1.4-.6 2.2-1.2 2.8-.2-2.6-1-4.4-2.2-5.2-1.8 1-4.2 1.2-6.2.6-1.6.4-3 1.4-3.6 2.7z" fill="url(#hr)"/><path d="M10.4 21.6h3.2l-.6 11.2H8.6z" fill="#0a2650"/></svg><div style="position:absolute;left:98px;top:244.58px;font-size:11.7px;line-height:11.7px;color:#2fb3d2;font-weight:400;white-space:nowrap;transform:scaleX(0.9552);transform-origin:0 0;">Sanderson, Joan</div><div style="position:absolute;left:98px;top:258.15px;font-size:7.4px;line-height:7.4px;color:#9a9a9a;font-weight:400;white-space:nowrap;transform:scaleX(1.0237);transform-origin:0 0;">M, 62Y</div><div style="position:absolute;left:98px;top:268.09px;font-size:7.6px;line-height:7.6px;color:#222;font-weight:400;white-space:nowrap;transform:scaleX(1.0970);transform-origin:0 0;">Omni Alpha Clinic</div><div style="position:absolute;left:98px;top:277.54px;font-size:7.9px;line-height:7.9px;color:#222;font-weight:400;white-space:nowrap;transform:scaleX(1.0498);transform-origin:0 0;">08:30 AM To 09:00 AM</div><div style="position:absolute;left:342.4px;top:257.1px;width:152px;height:24.2px;background:#fff;border:1px solid #c2c4c7;border-radius:3px 0 0 3px;box-sizing:border-box"></div><div style="position:absolute;left:494.3px;top:257.5px;width:18px;height:24.4px;background:#eceef0;border:1px solid #e0e2e4;border-left:none;border-radius:0 3px 3px 0;box-sizing:border-box"></div><div style="position:absolute;left:347.6px;top:265.03px;font-size:10.8px;line-height:10.8px;color:#383838;font-weight:400;white-space:nowrap;transform:scaleX(0.9249);transform-origin:0 0;">Grissom, Margaret</div><svg style="position:absolute;left:497px;top:262.90000000000003px" width="12" height="12" viewBox="0 0 12 12"><circle cx="5.2" cy="5.2" r="3.5" fill="none" stroke="#333" stroke-width="1.2"/><path d="M7.8 7.8l2.4 2.4" stroke="#333" stroke-width="1.4"/></svg><svg style="position:absolute;left:531.0px;top:258.8px" width="18" height="20" viewBox="0 0 18 20"><path d="M8.6 2.7c.8 0 1.4.5 1.4 1.2v.6c2.6.7 4 3 4 6v3.4l1.8 2.2V17H1.3v-.9l1.9-2.2v-3.4c0-3 1.4-5.3 4-6v-.6c0-.7.6-1.2 1.4-1.2z" fill="#111"/><rect x="7.6" y="7.8" width="2.2" height="6.2" fill="#fff"/><rect x="5.6" y="9.8" width="6.2" height="2.2" fill="#fff"/><rect x="7.5" y="17" width="2.2" height="2.5" rx=".6" fill="#111"/></svg><svg style="position:absolute;left:576.08px;top:258.8px" width="18" height="20" viewBox="0 0 18 20"><rect x="6.8" y="1.8" width="4.3" height="3.3" rx="1.3" fill="#8fd69b"/><path d="M6.8 4.6h4.3v2.3c0 1-.4 1.7-.9 2.3H7.7c-.5-.6-.9-1.3-.9-2.3z" fill="#20ba3b"/><path d="M7.2 9c-2.6.3-4.2 1.5-4.2 3.5v4.7h12.3v-4.7c0-2-1.6-3.2-4.2-3.5z" fill="#20ba3b"/><path d="M2.8 14.7l9.2-4.9" stroke="#fff" stroke-width="1"/><path d="M12.7 10.3l-3 7.2" stroke="#fff" stroke-width="1"/><path d="M7.4 15.4l2 2" stroke="#fff" stroke-width=".8"/></svg><svg style="position:absolute;left:621.16px;top:258.8px" width="18" height="20" viewBox="0 0 18 20"><polygon points="8.64,1.40 9.38,1.66 10.01,2.28 10.52,2.96 11.03,3.38 11.69,3.44 12.53,3.33 13.42,3.33 14.12,3.67 14.46,4.37 14.46,5.26 14.35,6.10 14.41,6.76 14.83,7.27 15.51,7.78 16.13,8.41 16.39,9.15 16.13,9.89 15.51,10.52 14.83,11.03 14.41,11.54 14.35,12.20 14.46,13.04 14.46,13.93 14.12,14.63 13.42,14.97 12.53,14.97 11.69,14.86 11.03,14.92 10.52,15.34 10.01,16.02 9.38,16.64 8.64,16.90 7.90,16.64 7.27,16.02 6.76,15.34 6.25,14.92 5.59,14.86 4.75,14.97 3.86,14.97 3.16,14.63 2.82,13.93 2.82,13.04 2.93,12.20 2.87,11.54 2.45,11.03 1.77,10.52 1.15,9.89 0.89,9.15 1.15,8.41 1.77,7.78 2.45,7.27 2.87,6.76 2.93,6.10 2.82,5.26 2.82,4.37 3.16,3.67 3.86,3.33 4.75,3.33 5.59,3.44 6.25,3.38 6.76,2.96 7.27,2.28 7.90,1.66" fill="none" stroke="#2a2a2a" stroke-width="1.15" stroke-linejoin="round"/><path d="M10.5 6.6c-.4-.7-1-1-1.9-1-1 0-1.8.6-1.8 1.5 0 2 3.8 1.4 3.8 3.6 0 1-.9 1.6-2 1.6-1 0-1.7-.4-2.1-1.1" fill="none" stroke="#111" stroke-width="1.3"/><path d="M8.6 4.6v1M8.6 12.3v1" stroke="#111" stroke-width="1.1"/></svg><svg style="position:absolute;left:666.24px;top:258.8px" width="18" height="20" viewBox="0 0 18 20"><circle cx="8.76" cy="9" r="8" fill="#050505"/><path d="M3.3 8.2l4.4 4.1 6.4-6.3" stroke="#fff" stroke-width="1.5" fill="none" stroke-linecap="round" stroke-linejoin="miter"/></svg><svg style="position:absolute;left:711.32px;top:258.8px" width="18" height="20" viewBox="0 0 18 20"><rect x="2.7" y="3.7" width="14.1" height="11.5" rx="2" fill="none" stroke="#2b2b2b" stroke-width="1.5"/><rect x="3.2" y="7.2" width="2.4" height="2.2" fill="#050505"/><rect x="13.8" y="7.2" width="2.4" height="2.2" fill="#050505"/><path d="M11.6 7.2c-.4-.7-1-1-1.8-1-1.3 0-2.2 1-2.2 2.4s.9 2.4 2.2 2.4c.8 0 1.4-.3 1.8-1" fill="none" stroke="#111" stroke-width="1.3"/><path d="M4.4 12.8h5" stroke="#9a9a9a" stroke-width=".8" stroke-dasharray="1 .6"/></svg><svg style="position:absolute;left:756.4px;top:258.8px" width="18" height="20" viewBox="0 0 18 20"><path d="M4.2 1.2h7.2l4.4 4.4v10c0 1.1-.9 2-2 2H4.2c-1.1 0-2-.9-2-2V3.2c0-1.1.9-2 2-2z" fill="none" stroke="#22bb44" stroke-width="1.7" stroke-linejoin="round"/><path d="M11.2 1.6v3.4c0 .5.3.8.8.8h3.4" fill="none" stroke="#22bb44" stroke-width="1.4"/><path d="M9.2 9.4h3.8M9.2 11.9h3.8" stroke="#3cc25a" stroke-width="1.1"/><path d="M9.2 14.3h3.8" stroke="#a9dcb4" stroke-width="1"/><path d="M6.6 8.2c-.6 0-1.2.4-1.2 1.1 0 1.4 2.4 1 2.4 2.6 0 .7-.6 1.1-1.2 1.1s-1.1-.3-1.3-.8M6.5 7.4v.8M6.5 13v.9" fill="none" stroke="#3cc25a" stroke-width=".9"/></svg><svg style="position:absolute;left:801.48px;top:258.8px" width="18" height="20" viewBox="0 0 18 20"><path d="M9 1.3C11 1.3 12 3.2 12.2 5.6 12.4 7.4 13.2 8.2 14.4 8.9 15.6 9.6 15.6 11.6 14 11.7 12.8 11.8 12 11.4 11.4 11 11 12.2 10 12.5 9 12.5S7 12.2 6.6 11C6 11.4 5.2 11.8 4 11.7 2.4 11.6 2.4 9.6 3.6 8.9 4.8 8.2 5.6 7.4 5.8 5.6 6 3.2 7 1.3 9 1.3z" fill="#050505"/><circle cx="2.3" cy="3.95" r="1.1" fill="#111"/><circle cx="15.8" cy="5.55" r="1.1" fill="#111"/><circle cx="2.3" cy="14.55" r="1.15" fill="#111"/><circle cx="6.8" cy="14.95" r=".95" fill="#555"/><circle cx="11.8" cy="14.95" r=".95" fill="#555"/><circle cx="9" cy="16.95" r=".9" fill="#666"/></svg><svg style="position:absolute;left:846.56px;top:258.8px" width="18" height="20" viewBox="0 0 18 20"><path d="M14.3 5.2A7.3 7.3 0 1 1 9.2 2.3" fill="none" stroke="#111" stroke-width="1.6"/><path d="M11.6 1.8l5 .1-1.4 4.4z" fill="#111"/><path d="M8.4 5.8v4.6h2.8" fill="none" stroke="#111" stroke-width="1.7"/></svg><svg style="position:absolute;left:891.64px;top:258.8px" width="18" height="20" viewBox="0 0 18 20"><path d="M8.66 2.1l6.2 2.3v4.8c0 3.8-2.6 6.6-6.2 7.8-3.6-1.2-6.2-4-6.2-7.8V4.4z" fill="#22bb44"/><path d="M5.2 10.3l2.2 2.1 4.6-4.9" stroke="#fff" stroke-width="1.6" fill="none"/></svg><svg style="position:absolute;left:936.72px;top:258.8px" width="18" height="20" viewBox="0 0 18 20"><circle cx="8.58" cy="9.35" r="7.5" fill="#fff" stroke="#050505" stroke-width="1.6"/><path d="M1.08 9.65h15a7.5 7.5 0 0 1-15 0z" fill="#050505"/></svg><svg style="position:absolute;left:981.8px;top:258.8px" width="18" height="20" viewBox="0 0 18 20"><path d="M3.6 1.8h6.8l4.8 4.8v8.8c0 .9-.7 1.6-1.6 1.6H3.6c-.9 0-1.6-.7-1.6-1.6V3.4c0-.9.7-1.6 1.6-1.6z" fill="none" stroke="#111" stroke-width="1.6" stroke-linejoin="round"/><path d="M10.2 2v3.6c0 .6.4 1 1 1h3.8" fill="none" stroke="#111" stroke-width="1.3"/><path d="M4.4 11.6h7.4" stroke="#888" stroke-width="1"/><path d="M4.8 14h7" stroke="#bbb" stroke-width="1.4"/></svg><svg style="position:absolute;left:1026.88px;top:258.8px" width="18" height="20" viewBox="0 0 18 20"><path d="M3.6 1.9h6.8l4.7 4.7v8.9c0 .9-.7 1.6-1.6 1.6H3.6c-.9 0-1.6-.7-1.6-1.6V3.5c0-.9.7-1.6 1.6-1.6z" fill="none" stroke="#111" stroke-width="1.6" stroke-linejoin="round"/><path d="M10.2 2.1v3.6c0 .6.4 1 1 1h3.7" fill="none" stroke="#111" stroke-width="1.3"/><path d="M4.6 9.7h2.6M10.6 9.7h1.4" stroke="#333" stroke-width="1"/><path d="M4.6 12h7.6" stroke="#777" stroke-width="1.1"/><path d="M4.6 14.2h1.8M10.4 14.2h1.6" stroke="#aaa" stroke-width=".9"/></svg><svg style="position:absolute;left:1071.96px;top:258.8px" width="18" height="20" viewBox="0 0 18 20"><path d="M3.6 1h9.9v2.4h-2v4l5.2 9.6H0.4l5.2-9.6v-4h-2z" fill="#050505"/><path d="M6.9 7.9L2.9 15.5h11.3l-4-7.6z" fill="#fff"/><circle cx="8.04" cy="10.95" r=".8" fill="#555"/><circle cx="9.84" cy="13.15" r="1.05" fill="#111"/></svg><svg style="position:absolute;left:1496.8px;top:260.55px" width="6" height="14" viewBox="0 0 6 14"><circle cx="3" cy="2.55" r="1.2" fill="#111"/><circle cx="3" cy="7" r="1.2" fill="#111"/><circle cx="3" cy="11.45" r="1.2" fill="#111"/></svg><div style="position:absolute;left:52px;top:294.9px;width:1464.6px;height:50.1px;background:#fff;border:1.5px solid #e3e4e7;border-left:none;border-radius:0 4px 4px 0;box-sizing:border-box"></div><div style="position:absolute;left:52px;top:295.2px;width:8px;height:49.5px;background:#ee9a9c"></div><div style="position:absolute;left:63.2px;top:299.0px;width:31.6px;height:35.5px;border:1px solid #e8e8e8;box-sizing:border-box;background:#fff"></div><svg style="position:absolute;left:64.60000000000001px;top:300.0px" width="29" height="34" viewBox="0 0 29 34"><defs><radialGradient id="sk" cx="0.5" cy="0.35" r="0.75"><stop offset="0" stop-color="#fde6cc"/><stop offset="0.55" stop-color="#ebbf98"/><stop offset="1" stop-color="#c48c62"/></radialGradient><linearGradient id="sh" x1="0" y1="0" x2="0" y2="1"><stop offset="0" stop-color="#eef9fd"/><stop offset="1" stop-color="#c4e3ef"/></linearGradient><linearGradient id="hr" x1="0" y1="0" x2="1" y2="1"><stop offset="0" stop-color="#7a4322"/><stop offset="1" stop-color="#3c1d0a"/></linearGradient></defs><path d="M1.4 32.2c-.4-7.4 3.4-12.2 9.2-14.4l3 1 3.4-1c6.2 2 10.6 6.6 10.2 14.4z" fill="url(#sh)"/><path d="M9.8 15.6h5.8v4l-2.9 2-2.9-2z" fill="#d7a078"/><ellipse cx="12.6" cy="10.6" rx="6.1" ry="8.6" fill="url(#sk)"/><path d="M6.4 9.6C5.6 3.4 8.4.3 12.8.3c4.4 0 7.4 2.8 6.8 8.4-.2 1.4-.6 2.2-1.2 2.8-.2-2.6-1-4.4-2.2-5.2-1.8 1-4.2 1.2-6.2.6-1.6.4-3 1.4-3.6 2.7z" fill="url(#hr)"/><path d="M10.4 21.6h3.2l-.6 11.2H8.6z" fill="#0a2650"/></svg><div style="position:absolute;left:98px;top:299.78px;font-size:11.7px;line-height:11.7px;color:#2fb3d2;font-weight:400;white-space:nowrap;transform:scaleX(0.9965);transform-origin:0 0;">Ellison, Matt</div><div style="position:absolute;left:98px;top:313.35px;font-size:7.4px;line-height:7.4px;color:#9a9a9a;font-weight:400;white-space:nowrap;transform:scaleX(1.0237);transform-origin:0 0;">M, 59Y</div><div style="position:absolute;left:98px;top:323.29px;font-size:7.6px;line-height:7.6px;color:#222;font-weight:400;white-space:nowrap;transform:scaleX(1.0970);transform-origin:0 0;">Omni Alpha Clinic</div><div style="position:absolute;left:98px;top:332.74px;font-size:7.9px;line-height:7.9px;color:#222;font-weight:400;white-space:nowrap;transform:scaleX(1.0498);transform-origin:0 0;">09:00 AM To 09:15 AM</div><div style="position:absolute;left:342.4px;top:312.3px;width:152px;height:24.2px;background:#fff;border:1px solid #c2c4c7;border-radius:3px 0 0 3px;box-sizing:border-box"></div><div style="position:absolute;left:494.3px;top:312.7px;width:18px;height:24.4px;background:#eceef0;border:1px solid #e0e2e4;border-left:none;border-radius:0 3px 3px 0;box-sizing:border-box"></div><div style="position:absolute;left:347.6px;top:320.23px;font-size:10.8px;line-height:10.8px;color:#383838;font-weight:400;white-space:nowrap;transform:scaleX(0.9249);transform-origin:0 0;">Grissom, Margaret</div><svg style="position:absolute;left:497px;top:318.1px" width="12" height="12" viewBox="0 0 12 12"><circle cx="5.2" cy="5.2" r="3.5" fill="none" stroke="#333" stroke-width="1.2"/><path d="M7.8 7.8l2.4 2.4" stroke="#333" stroke-width="1.4"/></svg><svg style="position:absolute;left:531.0px;top:317.0px" width="18" height="20" viewBox="0 0 18 20"><path d="M8.6 2.7c.8 0 1.4.5 1.4 1.2v.6c2.6.7 4 3 4 6v3.4l1.8 2.2V17H1.3v-.9l1.9-2.2v-3.4c0-3 1.4-5.3 4-6v-.6c0-.7.6-1.2 1.4-1.2z" fill="#111"/><rect x="7.6" y="7.8" width="2.2" height="6.2" fill="#fff"/><rect x="5.6" y="9.8" width="6.2" height="2.2" fill="#fff"/><rect x="7.5" y="17" width="2.2" height="2.5" rx=".6" fill="#111"/></svg><svg style="position:absolute;left:576.08px;top:317.0px" width="18" height="20" viewBox="0 0 18 20"><rect x="6.8" y="1.8" width="4.3" height="3.3" rx="1.3" fill="#8fd69b"/><path d="M6.8 4.6h4.3v2.3c0 1-.4 1.7-.9 2.3H7.7c-.5-.6-.9-1.3-.9-2.3z" fill="#20ba3b"/><path d="M7.2 9c-2.6.3-4.2 1.5-4.2 3.5v4.7h12.3v-4.7c0-2-1.6-3.2-4.2-3.5z" fill="#20ba3b"/><path d="M2.8 14.7l9.2-4.9" stroke="#fff" stroke-width="1"/><path d="M12.7 10.3l-3 7.2" stroke="#fff" stroke-width="1"/><path d="M7.4 15.4l2 2" stroke="#fff" stroke-width=".8"/></svg><svg style="position:absolute;left:621.16px;top:317.0px" width="18" height="20" viewBox="0 0 18 20"><polygon points="8.64,1.40 9.38,1.66 10.01,2.28 10.52,2.96 11.03,3.38 11.69,3.44 12.53,3.33 13.42,3.33 14.12,3.67 14.46,4.37 14.46,5.26 14.35,6.10 14.41,6.76 14.83,7.27 15.51,7.78 16.13,8.41 16.39,9.15 16.13,9.89 15.51,10.52 14.83,11.03 14.41,11.54 14.35,12.20 14.46,13.04 14.46,13.93 14.12,14.63 13.42,14.97 12.53,14.97 11.69,14.86 11.03,14.92 10.52,15.34 10.01,16.02 9.38,16.64 8.64,16.90 7.90,16.64 7.27,16.02 6.76,15.34 6.25,14.92 5.59,14.86 4.75,14.97 3.86,14.97 3.16,14.63 2.82,13.93 2.82,13.04 2.93,12.20 2.87,11.54 2.45,11.03 1.77,10.52 1.15,9.89 0.89,9.15 1.15,8.41 1.77,7.78 2.45,7.27 2.87,6.76 2.93,6.10 2.82,5.26 2.82,4.37 3.16,3.67 3.86,3.33 4.75,3.33 5.59,3.44 6.25,3.38 6.76,2.96 7.27,2.28 7.90,1.66" fill="none" stroke="#2a2a2a" stroke-width="1.15" stroke-linejoin="round"/><path d="M10.5 6.6c-.4-.7-1-1-1.9-1-1 0-1.8.6-1.8 1.5 0 2 3.8 1.4 3.8 3.6 0 1-.9 1.6-2 1.6-1 0-1.7-.4-2.1-1.1" fill="none" stroke="#111" stroke-width="1.3"/><path d="M8.6 4.6v1M8.6 12.3v1" stroke="#111" stroke-width="1.1"/></svg><svg style="position:absolute;left:666.24px;top:317.0px" width="18" height="20" viewBox="0 0 18 20"><circle cx="8.76" cy="9" r="8" fill="#050505"/><path d="M3.3 8.2l4.4 4.1 6.4-6.3" stroke="#fff" stroke-width="1.5" fill="none" stroke-linecap="round" stroke-linejoin="miter"/></svg><svg style="position:absolute;left:711.32px;top:317.0px" width="18" height="20" viewBox="0 0 18 20"><rect x="2.7" y="3.7" width="14.1" height="11.5" rx="2" fill="none" stroke="#2b2b2b" stroke-width="1.5"/><rect x="3.2" y="7.2" width="2.4" height="2.2" fill="#050505"/><rect x="13.8" y="7.2" width="2.4" height="2.2" fill="#050505"/><path d="M11.6 7.2c-.4-.7-1-1-1.8-1-1.3 0-2.2 1-2.2 2.4s.9 2.4 2.2 2.4c.8 0 1.4-.3 1.8-1" fill="none" stroke="#111" stroke-width="1.3"/><path d="M4.4 12.8h5" stroke="#9a9a9a" stroke-width=".8" stroke-dasharray="1 .6"/></svg><svg style="position:absolute;left:756.4px;top:317.0px" width="18" height="20" viewBox="0 0 18 20"><path d="M4.2 1.2h7.2l4.4 4.4v10c0 1.1-.9 2-2 2H4.2c-1.1 0-2-.9-2-2V3.2c0-1.1.9-2 2-2z" fill="none" stroke="#22bb44" stroke-width="1.7" stroke-linejoin="round"/><path d="M11.2 1.6v3.4c0 .5.3.8.8.8h3.4" fill="none" stroke="#22bb44" stroke-width="1.4"/><path d="M9.2 9.4h3.8M9.2 11.9h3.8" stroke="#3cc25a" stroke-width="1.1"/><path d="M9.2 14.3h3.8" stroke="#a9dcb4" stroke-width="1"/><path d="M6.6 8.2c-.6 0-1.2.4-1.2 1.1 0 1.4 2.4 1 2.4 2.6 0 .7-.6 1.1-1.2 1.1s-1.1-.3-1.3-.8M6.5 7.4v.8M6.5 13v.9" fill="none" stroke="#3cc25a" stroke-width=".9"/></svg><svg style="position:absolute;left:801.48px;top:317.0px" width="18" height="20" viewBox="0 0 18 20"><path d="M9 1.3C11 1.3 12 3.2 12.2 5.6 12.4 7.4 13.2 8.2 14.4 8.9 15.6 9.6 15.6 11.6 14 11.7 12.8 11.8 12 11.4 11.4 11 11 12.2 10 12.5 9 12.5S7 12.2 6.6 11C6 11.4 5.2 11.8 4 11.7 2.4 11.6 2.4 9.6 3.6 8.9 4.8 8.2 5.6 7.4 5.8 5.6 6 3.2 7 1.3 9 1.3z" fill="#050505"/><circle cx="2.3" cy="3.95" r="1.1" fill="#111"/><circle cx="15.8" cy="5.55" r="1.1" fill="#111"/><circle cx="2.3" cy="14.55" r="1.15" fill="#111"/><circle cx="6.8" cy="14.95" r=".95" fill="#555"/><circle cx="11.8" cy="14.95" r=".95" fill="#555"/><circle cx="9" cy="16.95" r=".9" fill="#666"/></svg><svg style="position:absolute;left:846.56px;top:317.0px" width="18" height="20" viewBox="0 0 18 20"><path d="M14.3 5.2A7.3 7.3 0 1 1 9.2 2.3" fill="none" stroke="#111" stroke-width="1.6"/><path d="M11.6 1.8l5 .1-1.4 4.4z" fill="#111"/><path d="M8.4 5.8v4.6h2.8" fill="none" stroke="#111" stroke-width="1.7"/></svg><svg style="position:absolute;left:891.64px;top:317.0px" width="18" height="20" viewBox="0 0 18 20"><path d="M8.66 2.1l6.2 2.3v4.8c0 3.8-2.6 6.6-6.2 7.8-3.6-1.2-6.2-4-6.2-7.8V4.4z" fill="#22bb44"/><path d="M5.2 10.3l2.2 2.1 4.6-4.9" stroke="#fff" stroke-width="1.6" fill="none"/></svg><svg style="position:absolute;left:936.72px;top:317.0px" width="18" height="20" viewBox="0 0 18 20"><circle cx="8.58" cy="9.35" r="7.5" fill="#fff" stroke="#050505" stroke-width="1.6"/><path d="M1.08 9.65h15a7.5 7.5 0 0 1-15 0z" fill="#050505"/></svg><svg style="position:absolute;left:981.8px;top:317.0px" width="18" height="20" viewBox="0 0 18 20"><path d="M3.6 1.8h6.8l4.8 4.8v8.8c0 .9-.7 1.6-1.6 1.6H3.6c-.9 0-1.6-.7-1.6-1.6V3.4c0-.9.7-1.6 1.6-1.6z" fill="none" stroke="#111" stroke-width="1.6" stroke-linejoin="round"/><path d="M10.2 2v3.6c0 .6.4 1 1 1h3.8" fill="none" stroke="#111" stroke-width="1.3"/><path d="M4.4 11.6h7.4" stroke="#888" stroke-width="1"/><path d="M4.8 14h7" stroke="#bbb" stroke-width="1.4"/></svg><svg style="position:absolute;left:1026.88px;top:317.0px" width="18" height="20" viewBox="0 0 18 20"><path d="M3.6 1.9h6.8l4.7 4.7v8.9c0 .9-.7 1.6-1.6 1.6H3.6c-.9 0-1.6-.7-1.6-1.6V3.5c0-.9.7-1.6 1.6-1.6z" fill="none" stroke="#111" stroke-width="1.6" stroke-linejoin="round"/><path d="M10.2 2.1v3.6c0 .6.4 1 1 1h3.7" fill="none" stroke="#111" stroke-width="1.3"/><path d="M4.6 9.7h2.6M10.6 9.7h1.4" stroke="#333" stroke-width="1"/><path d="M4.6 12h7.6" stroke="#777" stroke-width="1.1"/><path d="M4.6 14.2h1.8M10.4 14.2h1.6" stroke="#aaa" stroke-width=".9"/></svg><svg style="position:absolute;left:1071.96px;top:317.0px" width="18" height="20" viewBox="0 0 18 20"><path d="M3.6 1h9.9v2.4h-2v4l5.2 9.6H0.4l5.2-9.6v-4h-2z" fill="#050505"/><path d="M6.9 7.9L2.9 15.5h11.3l-4-7.6z" fill="#fff"/><circle cx="8.04" cy="10.95" r=".8" fill="#555"/><circle cx="9.84" cy="13.15" r="1.05" fill="#111"/></svg><svg style="position:absolute;left:1496.8px;top:315.75px" width="6" height="14" viewBox="0 0 6 14"><circle cx="3" cy="2.55" r="1.2" fill="#111"/><circle cx="3" cy="7" r="1.2" fill="#111"/><circle cx="3" cy="11.45" r="1.2" fill="#111"/></svg><div style="position:absolute;left:52px;top:350.09999999999997px;width:1464.6px;height:50.1px;background:#fff;border:1.5px solid #e3e4e7;border-left:none;border-radius:0 4px 4px 0;box-sizing:border-box"></div><div style="position:absolute;left:52px;top:350.4px;width:8px;height:49.5px;background:#ee9a9c"></div><div style="position:absolute;left:63.2px;top:354.2px;width:31.6px;height:35.5px;border:1px solid #e8e8e8;box-sizing:border-box;background:#fff"></div><svg style="position:absolute;left:64.60000000000001px;top:355.2px" width="29" height="34" viewBox="0 0 29 34"><defs><radialGradient id="sk" cx="0.5" cy="0.35" r="0.75"><stop offset="0" stop-color="#fde6cc"/><stop offset="0.55" stop-color="#ebbf98"/><stop offset="1" stop-color="#c48c62"/></radialGradient><linearGradient id="sh" x1="0" y1="0" x2="0" y2="1"><stop offset="0" stop-color="#eef9fd"/><stop offset="1" stop-color="#c4e3ef"/></linearGradient><linearGradient id="hr" x1="0" y1="0" x2="1" y2="1"><stop offset="0" stop-color="#7a4322"/><stop offset="1" stop-color="#3c1d0a"/></linearGradient></defs><path d="M1.4 32.2c-.4-7.4 3.4-12.2 9.2-14.4l3 1 3.4-1c6.2 2 10.6 6.6 10.2 14.4z" fill="url(#sh)"/><path d="M9.8 15.6h5.8v4l-2.9 2-2.9-2z" fill="#d7a078"/><ellipse cx="12.6" cy="10.6" rx="6.1" ry="8.6" fill="url(#sk)"/><path d="M6.4 9.6C5.6 3.4 8.4.3 12.8.3c4.4 0 7.4 2.8 6.8 8.4-.2 1.4-.6 2.2-1.2 2.8-.2-2.6-1-4.4-2.2-5.2-1.8 1-4.2 1.2-6.2.6-1.6.4-3 1.4-3.6 2.7z" fill="url(#hr)"/><path d="M10.4 21.6h3.2l-.6 11.2H8.6z" fill="#0a2650"/></svg><div style="position:absolute;left:98px;top:354.98px;font-size:11.7px;line-height:11.7px;color:#2fb3d2;font-weight:400;white-space:nowrap;transform:scaleX(0.9765);transform-origin:0 0;">Gibson, Carl</div><div style="position:absolute;left:98px;top:368.55px;font-size:7.4px;line-height:7.4px;color:#9a9a9a;font-weight:400;white-space:nowrap;transform:scaleX(1.0237);transform-origin:0 0;">M, 61Y</div><div style="position:absolute;left:98px;top:378.49px;font-size:7.6px;line-height:7.6px;color:#222;font-weight:400;white-space:nowrap;transform:scaleX(1.0970);transform-origin:0 0;">Omni Alpha Clinic</div><div style="position:absolute;left:98px;top:387.94px;font-size:7.9px;line-height:7.9px;color:#222;font-weight:400;white-space:nowrap;transform:scaleX(1.0498);transform-origin:0 0;">09:30 AM To 09:45 AM</div><div style="position:absolute;left:342.4px;top:367.5px;width:152px;height:24.2px;background:#fff;border:1px solid #c2c4c7;border-radius:3px 0 0 3px;box-sizing:border-box"></div><div style="position:absolute;left:494.3px;top:367.9px;width:18px;height:24.4px;background:#eceef0;border:1px solid #e0e2e4;border-left:none;border-radius:0 3px 3px 0;box-sizing:border-box"></div><div style="position:absolute;left:347.6px;top:375.43px;font-size:10.8px;line-height:10.8px;color:#383838;font-weight:400;white-space:nowrap;transform:scaleX(0.9249);transform-origin:0 0;">Grissom, Margaret</div><svg style="position:absolute;left:497px;top:373.3px" width="12" height="12" viewBox="0 0 12 12"><circle cx="5.2" cy="5.2" r="3.5" fill="none" stroke="#333" stroke-width="1.2"/><path d="M7.8 7.8l2.4 2.4" stroke="#333" stroke-width="1.4"/></svg><svg style="position:absolute;left:531.0px;top:370.55px" width="18" height="20" viewBox="0 0 18 20"><path d="M8.6 2.7c.8 0 1.4.5 1.4 1.2v.6c2.6.7 4 3 4 6v3.4l1.8 2.2V17H1.3v-.9l1.9-2.2v-3.4c0-3 1.4-5.3 4-6v-.6c0-.7.6-1.2 1.4-1.2z" fill="#111"/><rect x="7.6" y="7.8" width="2.2" height="6.2" fill="#fff"/><rect x="5.6" y="9.8" width="6.2" height="2.2" fill="#fff"/><rect x="7.5" y="17" width="2.2" height="2.5" rx=".6" fill="#111"/></svg><svg style="position:absolute;left:576.08px;top:370.55px" width="18" height="20" viewBox="0 0 18 20"><rect x="6.8" y="1.8" width="4.3" height="3.3" rx="1.3" fill="#8fd69b"/><path d="M6.8 4.6h4.3v2.3c0 1-.4 1.7-.9 2.3H7.7c-.5-.6-.9-1.3-.9-2.3z" fill="#20ba3b"/><path d="M7.2 9c-2.6.3-4.2 1.5-4.2 3.5v4.7h12.3v-4.7c0-2-1.6-3.2-4.2-3.5z" fill="#20ba3b"/><path d="M2.8 14.7l9.2-4.9" stroke="#fff" stroke-width="1"/><path d="M12.7 10.3l-3 7.2" stroke="#fff" stroke-width="1"/><path d="M7.4 15.4l2 2" stroke="#fff" stroke-width=".8"/></svg><svg style="position:absolute;left:621.16px;top:370.55px" width="18" height="20" viewBox="0 0 18 20"><polygon points="8.64,1.40 9.38,1.66 10.01,2.28 10.52,2.96 11.03,3.38 11.69,3.44 12.53,3.33 13.42,3.33 14.12,3.67 14.46,4.37 14.46,5.26 14.35,6.10 14.41,6.76 14.83,7.27 15.51,7.78 16.13,8.41 16.39,9.15 16.13,9.89 15.51,10.52 14.83,11.03 14.41,11.54 14.35,12.20 14.46,13.04 14.46,13.93 14.12,14.63 13.42,14.97 12.53,14.97 11.69,14.86 11.03,14.92 10.52,15.34 10.01,16.02 9.38,16.64 8.64,16.90 7.90,16.64 7.27,16.02 6.76,15.34 6.25,14.92 5.59,14.86 4.75,14.97 3.86,14.97 3.16,14.63 2.82,13.93 2.82,13.04 2.93,12.20 2.87,11.54 2.45,11.03 1.77,10.52 1.15,9.89 0.89,9.15 1.15,8.41 1.77,7.78 2.45,7.27 2.87,6.76 2.93,6.10 2.82,5.26 2.82,4.37 3.16,3.67 3.86,3.33 4.75,3.33 5.59,3.44 6.25,3.38 6.76,2.96 7.27,2.28 7.90,1.66" fill="none" stroke="#2a2a2a" stroke-width="1.15" stroke-linejoin="round"/><path d="M10.5 6.6c-.4-.7-1-1-1.9-1-1 0-1.8.6-1.8 1.5 0 2 3.8 1.4 3.8 3.6 0 1-.9 1.6-2 1.6-1 0-1.7-.4-2.1-1.1" fill="none" stroke="#111" stroke-width="1.3"/><path d="M8.6 4.6v1M8.6 12.3v1" stroke="#111" stroke-width="1.1"/></svg><svg style="position:absolute;left:666.24px;top:370.55px" width="18" height="20" viewBox="0 0 18 20"><circle cx="8.76" cy="9" r="8" fill="#050505"/><path d="M3.3 8.2l4.4 4.1 6.4-6.3" stroke="#fff" stroke-width="1.5" fill="none" stroke-linecap="round" stroke-linejoin="miter"/></svg><svg style="position:absolute;left:711.32px;top:370.55px" width="18" height="20" viewBox="0 0 18 20"><rect x="2.7" y="3.7" width="14.1" height="11.5" rx="2" fill="none" stroke="#2b2b2b" stroke-width="1.5"/><rect x="3.2" y="7.2" width="2.4" height="2.2" fill="#050505"/><rect x="13.8" y="7.2" width="2.4" height="2.2" fill="#050505"/><path d="M11.6 7.2c-.4-.7-1-1-1.8-1-1.3 0-2.2 1-2.2 2.4s.9 2.4 2.2 2.4c.8 0 1.4-.3 1.8-1" fill="none" stroke="#111" stroke-width="1.3"/><path d="M4.4 12.8h5" stroke="#9a9a9a" stroke-width=".8" stroke-dasharray="1 .6"/></svg><svg style="position:absolute;left:756.4px;top:370.55px" width="18" height="20" viewBox="0 0 18 20"><path d="M4.2 1.2h7.2l4.4 4.4v10c0 1.1-.9 2-2 2H4.2c-1.1 0-2-.9-2-2V3.2c0-1.1.9-2 2-2z" fill="none" stroke="#22bb44" stroke-width="1.7" stroke-linejoin="round"/><path d="M11.2 1.6v3.4c0 .5.3.8.8.8h3.4" fill="none" stroke="#22bb44" stroke-width="1.4"/><path d="M9.2 9.4h3.8M9.2 11.9h3.8" stroke="#3cc25a" stroke-width="1.1"/><path d="M9.2 14.3h3.8" stroke="#a9dcb4" stroke-width="1"/><path d="M6.6 8.2c-.6 0-1.2.4-1.2 1.1 0 1.4 2.4 1 2.4 2.6 0 .7-.6 1.1-1.2 1.1s-1.1-.3-1.3-.8M6.5 7.4v.8M6.5 13v.9" fill="none" stroke="#3cc25a" stroke-width=".9"/></svg><svg style="position:absolute;left:801.48px;top:370.55px" width="18" height="20" viewBox="0 0 18 20"><path d="M9 1.3C11 1.3 12 3.2 12.2 5.6 12.4 7.4 13.2 8.2 14.4 8.9 15.6 9.6 15.6 11.6 14 11.7 12.8 11.8 12 11.4 11.4 11 11 12.2 10 12.5 9 12.5S7 12.2 6.6 11C6 11.4 5.2 11.8 4 11.7 2.4 11.6 2.4 9.6 3.6 8.9 4.8 8.2 5.6 7.4 5.8 5.6 6 3.2 7 1.3 9 1.3z" fill="#050505"/><circle cx="2.3" cy="3.95" r="1.1" fill="#111"/><circle cx="15.8" cy="5.55" r="1.1" fill="#111"/><circle cx="2.3" cy="14.55" r="1.15" fill="#111"/><circle cx="6.8" cy="14.95" r=".95" fill="#555"/><circle cx="11.8" cy="14.95" r=".95" fill="#555"/><circle cx="9" cy="16.95" r=".9" fill="#666"/></svg><svg style="position:absolute;left:846.56px;top:370.55px" width="18" height="20" viewBox="0 0 18 20"><path d="M14.3 5.2A7.3 7.3 0 1 1 9.2 2.3" fill="none" stroke="#111" stroke-width="1.6"/><path d="M11.6 1.8l5 .1-1.4 4.4z" fill="#111"/><path d="M8.4 5.8v4.6h2.8" fill="none" stroke="#111" stroke-width="1.7"/></svg><svg style="position:absolute;left:891.64px;top:370.55px" width="18" height="20" viewBox="0 0 18 20"><path d="M8.66 2.1l6.2 2.3v4.8c0 3.8-2.6 6.6-6.2 7.8-3.6-1.2-6.2-4-6.2-7.8V4.4z" fill="#22bb44"/><path d="M5.2 10.3l2.2 2.1 4.6-4.9" stroke="#fff" stroke-width="1.6" fill="none"/></svg><svg style="position:absolute;left:936.72px;top:370.55px" width="18" height="20" viewBox="0 0 18 20"><circle cx="8.58" cy="9.35" r="7.5" fill="#fff" stroke="#050505" stroke-width="1.6"/><path d="M1.08 9.65h15a7.5 7.5 0 0 1-15 0z" fill="#050505"/></svg><svg style="position:absolute;left:981.8px;top:370.55px" width="18" height="20" viewBox="0 0 18 20"><path d="M3.6 1.8h6.8l4.8 4.8v8.8c0 .9-.7 1.6-1.6 1.6H3.6c-.9 0-1.6-.7-1.6-1.6V3.4c0-.9.7-1.6 1.6-1.6z" fill="none" stroke="#111" stroke-width="1.6" stroke-linejoin="round"/><path d="M10.2 2v3.6c0 .6.4 1 1 1h3.8" fill="none" stroke="#111" stroke-width="1.3"/><path d="M4.4 11.6h7.4" stroke="#888" stroke-width="1"/><path d="M4.8 14h7" stroke="#bbb" stroke-width="1.4"/></svg><svg style="position:absolute;left:1026.88px;top:370.55px" width="18" height="20" viewBox="0 0 18 20"><path d="M3.6 1.9h6.8l4.7 4.7v8.9c0 .9-.7 1.6-1.6 1.6H3.6c-.9 0-1.6-.7-1.6-1.6V3.5c0-.9.7-1.6 1.6-1.6z" fill="none" stroke="#111" stroke-width="1.6" stroke-linejoin="round"/><path d="M10.2 2.1v3.6c0 .6.4 1 1 1h3.7" fill="none" stroke="#111" stroke-width="1.3"/><path d="M4.6 9.7h2.6M10.6 9.7h1.4" stroke="#333" stroke-width="1"/><path d="M4.6 12h7.6" stroke="#777" stroke-width="1.1"/><path d="M4.6 14.2h1.8M10.4 14.2h1.6" stroke="#aaa" stroke-width=".9"/></svg><svg style="position:absolute;left:1071.96px;top:370.55px" width="18" height="20" viewBox="0 0 18 20"><path d="M3.6 1h9.9v2.4h-2v4l5.2 9.6H0.4l5.2-9.6v-4h-2z" fill="#050505"/><path d="M6.9 7.9L2.9 15.5h11.3l-4-7.6z" fill="#fff"/><circle cx="8.04" cy="10.95" r=".8" fill="#555"/><circle cx="9.84" cy="13.15" r="1.05" fill="#111"/></svg><svg style="position:absolute;left:1496.8px;top:370.95px" width="6" height="14" viewBox="0 0 6 14"><circle cx="3" cy="2.55" r="1.2" fill="#111"/><circle cx="3" cy="7" r="1.2" fill="#111"/><circle cx="3" cy="11.45" r="1.2" fill="#111"/></svg><div style="position:absolute;left:52px;top:404.7px;width:1464.6px;height:50.1px;background:#fff;border:1.5px solid #e3e4e7;border-left:none;border-radius:0 4px 4px 0;box-sizing:border-box"></div><div style="position:absolute;left:52px;top:405.0px;width:8px;height:49.5px;background:#ee9a9c"></div><div style="position:absolute;left:63.2px;top:408.8px;width:31.6px;height:35.5px;border:1px solid #e8e8e8;box-sizing:border-box;background:#fff"></div><svg style="position:absolute;left:64.60000000000001px;top:409.8px" width="29" height="34" viewBox="0 0 29 34"><defs><radialGradient id="sk" cx="0.5" cy="0.35" r="0.75"><stop offset="0" stop-color="#fde6cc"/><stop offset="0.55" stop-color="#ebbf98"/><stop offset="1" stop-color="#c48c62"/></radialGradient><linearGradient id="sh" x1="0" y1="0" x2="0" y2="1"><stop offset="0" stop-color="#eef9fd"/><stop offset="1" stop-color="#c4e3ef"/></linearGradient><linearGradient id="hr" x1="0" y1="0" x2="1" y2="1"><stop offset="0" stop-color="#7a4322"/><stop offset="1" stop-color="#3c1d0a"/></linearGradient></defs><path d="M1.4 32.2c-.4-7.4 3.4-12.2 9.2-14.4l3 1 3.4-1c6.2 2 10.6 6.6 10.2 14.4z" fill="url(#sh)"/><path d="M9.8 15.6h5.8v4l-2.9 2-2.9-2z" fill="#d7a078"/><ellipse cx="12.6" cy="10.6" rx="6.1" ry="8.6" fill="url(#sk)"/><path d="M6.4 9.6C5.6 3.4 8.4.3 12.8.3c4.4 0 7.4 2.8 6.8 8.4-.2 1.4-.6 2.2-1.2 2.8-.2-2.6-1-4.4-2.2-5.2-1.8 1-4.2 1.2-6.2.6-1.6.4-3 1.4-3.6 2.7z" fill="url(#hr)"/><path d="M10.4 21.6h3.2l-.6 11.2H8.6z" fill="#0a2650"/></svg><div style="position:absolute;left:98px;top:409.58px;font-size:11.7px;line-height:11.7px;color:#2fb3d2;font-weight:400;white-space:nowrap;transform:scaleX(0.9850);transform-origin:0 0;">Edmunds, Stephanie</div><div style="position:absolute;left:98px;top:423.15px;font-size:7.4px;line-height:7.4px;color:#9a9a9a;font-weight:400;white-space:nowrap;transform:scaleX(1.1440);transform-origin:0 0;">F, 50Y</div><div style="position:absolute;left:98px;top:433.09px;font-size:7.6px;line-height:7.6px;color:#222;font-weight:400;white-space:nowrap;transform:scaleX(1.0970);transform-origin:0 0;">Omni Alpha Clinic</div><div style="position:absolute;left:98px;top:442.54px;font-size:7.9px;line-height:7.9px;color:#222;font-weight:400;white-space:nowrap;transform:scaleX(1.0498);transform-origin:0 0;">10:00 AM To 10:15 AM</div><div style="position:absolute;left:342.4px;top:422.1px;width:152px;height:24.2px;background:#fff;border:1px solid #c2c4c7;border-radius:3px 0 0 3px;box-sizing:border-box"></div><div style="position:absolute;left:494.3px;top:422.5px;width:18px;height:24.4px;background:#eceef0;border:1px solid #e0e2e4;border-left:none;border-radius:0 3px 3px 0;box-sizing:border-box"></div><div style="position:absolute;left:347.6px;top:430.03px;font-size:10.8px;line-height:10.8px;color:#383838;font-weight:400;white-space:nowrap;transform:scaleX(0.9249);transform-origin:0 0;">Grissom, Margaret</div><svg style="position:absolute;left:497px;top:427.90000000000003px" width="12" height="12" viewBox="0 0 12 12"><circle cx="5.2" cy="5.2" r="3.5" fill="none" stroke="#333" stroke-width="1.2"/><path d="M7.8 7.8l2.4 2.4" stroke="#333" stroke-width="1.4"/></svg><svg style="position:absolute;left:531.0px;top:426.15px" width="18" height="20" viewBox="0 0 18 20"><path d="M8.6 2.7c.8 0 1.4.5 1.4 1.2v.6c2.6.7 4 3 4 6v3.4l1.8 2.2V17H1.3v-.9l1.9-2.2v-3.4c0-3 1.4-5.3 4-6v-.6c0-.7.6-1.2 1.4-1.2z" fill="#111"/><rect x="7.6" y="7.8" width="2.2" height="6.2" fill="#fff"/><rect x="5.6" y="9.8" width="6.2" height="2.2" fill="#fff"/><rect x="7.5" y="17" width="2.2" height="2.5" rx=".6" fill="#111"/></svg><svg style="position:absolute;left:576.08px;top:426.15px" width="18" height="20" viewBox="0 0 18 20"><rect x="6.8" y="1.8" width="4.3" height="3.3" rx="1.3" fill="#8fd69b"/><path d="M6.8 4.6h4.3v2.3c0 1-.4 1.7-.9 2.3H7.7c-.5-.6-.9-1.3-.9-2.3z" fill="#20ba3b"/><path d="M7.2 9c-2.6.3-4.2 1.5-4.2 3.5v4.7h12.3v-4.7c0-2-1.6-3.2-4.2-3.5z" fill="#20ba3b"/><path d="M2.8 14.7l9.2-4.9" stroke="#fff" stroke-width="1"/><path d="M12.7 10.3l-3 7.2" stroke="#fff" stroke-width="1"/><path d="M7.4 15.4l2 2" stroke="#fff" stroke-width=".8"/></svg><svg style="position:absolute;left:621.16px;top:426.15px" width="18" height="20" viewBox="0 0 18 20"><polygon points="8.64,1.40 9.38,1.66 10.01,2.28 10.52,2.96 11.03,3.38 11.69,3.44 12.53,3.33 13.42,3.33 14.12,3.67 14.46,4.37 14.46,5.26 14.35,6.10 14.41,6.76 14.83,7.27 15.51,7.78 16.13,8.41 16.39,9.15 16.13,9.89 15.51,10.52 14.83,11.03 14.41,11.54 14.35,12.20 14.46,13.04 14.46,13.93 14.12,14.63 13.42,14.97 12.53,14.97 11.69,14.86 11.03,14.92 10.52,15.34 10.01,16.02 9.38,16.64 8.64,16.90 7.90,16.64 7.27,16.02 6.76,15.34 6.25,14.92 5.59,14.86 4.75,14.97 3.86,14.97 3.16,14.63 2.82,13.93 2.82,13.04 2.93,12.20 2.87,11.54 2.45,11.03 1.77,10.52 1.15,9.89 0.89,9.15 1.15,8.41 1.77,7.78 2.45,7.27 2.87,6.76 2.93,6.10 2.82,5.26 2.82,4.37 3.16,3.67 3.86,3.33 4.75,3.33 5.59,3.44 6.25,3.38 6.76,2.96 7.27,2.28 7.90,1.66" fill="none" stroke="#2a2a2a" stroke-width="1.15" stroke-linejoin="round"/><path d="M10.5 6.6c-.4-.7-1-1-1.9-1-1 0-1.8.6-1.8 1.5 0 2 3.8 1.4 3.8 3.6 0 1-.9 1.6-2 1.6-1 0-1.7-.4-2.1-1.1" fill="none" stroke="#111" stroke-width="1.3"/><path d="M8.6 4.6v1M8.6 12.3v1" stroke="#111" stroke-width="1.1"/></svg><svg style="position:absolute;left:666.24px;top:426.15px" width="18" height="20" viewBox="0 0 18 20"><circle cx="8.76" cy="9" r="8" fill="#050505"/><path d="M3.3 8.2l4.4 4.1 6.4-6.3" stroke="#fff" stroke-width="1.5" fill="none" stroke-linecap="round" stroke-linejoin="miter"/></svg><svg style="position:absolute;left:711.32px;top:426.15px" width="18" height="20" viewBox="0 0 18 20"><rect x="2.7" y="3.7" width="14.1" height="11.5" rx="2" fill="none" stroke="#2b2b2b" stroke-width="1.5"/><rect x="3.2" y="7.2" width="2.4" height="2.2" fill="#050505"/><rect x="13.8" y="7.2" width="2.4" height="2.2" fill="#050505"/><path d="M11.6 7.2c-.4-.7-1-1-1.8-1-1.3 0-2.2 1-2.2 2.4s.9 2.4 2.2 2.4c.8 0 1.4-.3 1.8-1" fill="none" stroke="#111" stroke-width="1.3"/><path d="M4.4 12.8h5" stroke="#9a9a9a" stroke-width=".8" stroke-dasharray="1 .6"/></svg><svg style="position:absolute;left:756.4px;top:426.15px" width="18" height="20" viewBox="0 0 18 20"><path d="M4.2 1.2h7.2l4.4 4.4v10c0 1.1-.9 2-2 2H4.2c-1.1 0-2-.9-2-2V3.2c0-1.1.9-2 2-2z" fill="none" stroke="#22bb44" stroke-width="1.7" stroke-linejoin="round"/><path d="M11.2 1.6v3.4c0 .5.3.8.8.8h3.4" fill="none" stroke="#22bb44" stroke-width="1.4"/><path d="M9.2 9.4h3.8M9.2 11.9h3.8" stroke="#3cc25a" stroke-width="1.1"/><path d="M9.2 14.3h3.8" stroke="#a9dcb4" stroke-width="1"/><path d="M6.6 8.2c-.6 0-1.2.4-1.2 1.1 0 1.4 2.4 1 2.4 2.6 0 .7-.6 1.1-1.2 1.1s-1.1-.3-1.3-.8M6.5 7.4v.8M6.5 13v.9" fill="none" stroke="#3cc25a" stroke-width=".9"/></svg><svg style="position:absolute;left:801.48px;top:426.15px" width="18" height="20" viewBox="0 0 18 20"><path d="M9 1.3C11 1.3 12 3.2 12.2 5.6 12.4 7.4 13.2 8.2 14.4 8.9 15.6 9.6 15.6 11.6 14 11.7 12.8 11.8 12 11.4 11.4 11 11 12.2 10 12.5 9 12.5S7 12.2 6.6 11C6 11.4 5.2 11.8 4 11.7 2.4 11.6 2.4 9.6 3.6 8.9 4.8 8.2 5.6 7.4 5.8 5.6 6 3.2 7 1.3 9 1.3z" fill="#050505"/><circle cx="2.3" cy="3.95" r="1.1" fill="#111"/><circle cx="15.8" cy="5.55" r="1.1" fill="#111"/><circle cx="2.3" cy="14.55" r="1.15" fill="#111"/><circle cx="6.8" cy="14.95" r=".95" fill="#555"/><circle cx="11.8" cy="14.95" r=".95" fill="#555"/><circle cx="9" cy="16.95" r=".9" fill="#666"/></svg><svg style="position:absolute;left:846.56px;top:426.15px" width="18" height="20" viewBox="0 0 18 20"><path d="M14.3 5.2A7.3 7.3 0 1 1 9.2 2.3" fill="none" stroke="#111" stroke-width="1.6"/><path d="M11.6 1.8l5 .1-1.4 4.4z" fill="#111"/><path d="M8.4 5.8v4.6h2.8" fill="none" stroke="#111" stroke-width="1.7"/></svg><svg style="position:absolute;left:891.64px;top:426.15px" width="18" height="20" viewBox="0 0 18 20"><path d="M8.66 2.1l6.2 2.3v4.8c0 3.8-2.6 6.6-6.2 7.8-3.6-1.2-6.2-4-6.2-7.8V4.4z" fill="#22bb44"/><path d="M5.2 10.3l2.2 2.1 4.6-4.9" stroke="#fff" stroke-width="1.6" fill="none"/></svg><svg style="position:absolute;left:936.72px;top:426.15px" width="18" height="20" viewBox="0 0 18 20"><circle cx="8.58" cy="9.35" r="7.5" fill="#fff" stroke="#050505" stroke-width="1.6"/><path d="M1.08 9.65h15a7.5 7.5 0 0 1-15 0z" fill="#050505"/></svg><svg style="position:absolute;left:981.8px;top:426.15px" width="18" height="20" viewBox="0 0 18 20"><path d="M3.6 1.8h6.8l4.8 4.8v8.8c0 .9-.7 1.6-1.6 1.6H3.6c-.9 0-1.6-.7-1.6-1.6V3.4c0-.9.7-1.6 1.6-1.6z" fill="none" stroke="#111" stroke-width="1.6" stroke-linejoin="round"/><path d="M10.2 2v3.6c0 .6.4 1 1 1h3.8" fill="none" stroke="#111" stroke-width="1.3"/><path d="M4.4 11.6h7.4" stroke="#888" stroke-width="1"/><path d="M4.8 14h7" stroke="#bbb" stroke-width="1.4"/></svg><svg style="position:absolute;left:1026.88px;top:426.15px" width="18" height="20" viewBox="0 0 18 20"><path d="M3.6 1.9h6.8l4.7 4.7v8.9c0 .9-.7 1.6-1.6 1.6H3.6c-.9 0-1.6-.7-1.6-1.6V3.5c0-.9.7-1.6 1.6-1.6z" fill="none" stroke="#111" stroke-width="1.6" stroke-linejoin="round"/><path d="M10.2 2.1v3.6c0 .6.4 1 1 1h3.7" fill="none" stroke="#111" stroke-width="1.3"/><path d="M4.6 9.7h2.6M10.6 9.7h1.4" stroke="#333" stroke-width="1"/><path d="M4.6 12h7.6" stroke="#777" stroke-width="1.1"/><path d="M4.6 14.2h1.8M10.4 14.2h1.6" stroke="#aaa" stroke-width=".9"/></svg><svg style="position:absolute;left:1071.96px;top:426.15px" width="18" height="20" viewBox="0 0 18 20"><path d="M3.6 1h9.9v2.4h-2v4l5.2 9.6H0.4l5.2-9.6v-4h-2z" fill="#050505"/><path d="M6.9 7.9L2.9 15.5h11.3l-4-7.6z" fill="#fff"/><circle cx="8.04" cy="10.95" r=".8" fill="#555"/><circle cx="9.84" cy="13.15" r="1.05" fill="#111"/></svg><svg style="position:absolute;left:1496.8px;top:425.55px" width="6" height="14" viewBox="0 0 6 14"><circle cx="3" cy="2.55" r="1.2" fill="#111"/><circle cx="3" cy="7" r="1.2" fill="#111"/><circle cx="3" cy="11.45" r="1.2" fill="#111"/></svg><div style="position:absolute;left:52px;top:461.0px;width:1464.6px;height:50.1px;background:#fff;border:1.5px solid #e3e4e7;border-left:none;border-radius:0 4px 4px 0;box-sizing:border-box"></div><div style="position:absolute;left:52px;top:461.3px;width:8px;height:49.5px;background:#76ee3e"></div><div style="position:absolute;left:63.2px;top:465.1px;width:31.6px;height:35.5px;border:1px solid #e8e8e8;box-sizing:border-box;background:#fff"></div><svg style="position:absolute;left:64.60000000000001px;top:466.1px" width="29" height="34" viewBox="0 0 29 34"><defs><radialGradient id="sk" cx="0.5" cy="0.35" r="0.75"><stop offset="0" stop-color="#fde6cc"/><stop offset="0.55" stop-color="#ebbf98"/><stop offset="1" stop-color="#c48c62"/></radialGradient><linearGradient id="sh" x1="0" y1="0" x2="0" y2="1"><stop offset="0" stop-color="#eef9fd"/><stop offset="1" stop-color="#c4e3ef"/></linearGradient><linearGradient id="hr" x1="0" y1="0" x2="1" y2="1"><stop offset="0" stop-color="#7a4322"/><stop offset="1" stop-color="#3c1d0a"/></linearGradient></defs><path d="M1.4 32.2c-.4-7.4 3.4-12.2 9.2-14.4l3 1 3.4-1c6.2 2 10.6 6.6 10.2 14.4z" fill="url(#sh)"/><path d="M9.8 15.6h5.8v4l-2.9 2-2.9-2z" fill="#d7a078"/><ellipse cx="12.6" cy="10.6" rx="6.1" ry="8.6" fill="url(#sk)"/><path d="M6.4 9.6C5.6 3.4 8.4.3 12.8.3c4.4 0 7.4 2.8 6.8 8.4-.2 1.4-.6 2.2-1.2 2.8-.2-2.6-1-4.4-2.2-5.2-1.8 1-4.2 1.2-6.2.6-1.6.4-3 1.4-3.6 2.7z" fill="url(#hr)"/><path d="M10.4 21.6h3.2l-.6 11.2H8.6z" fill="#0a2650"/></svg><div style="position:absolute;left:98px;top:465.88px;font-size:11.7px;line-height:11.7px;color:#2fb3d2;font-weight:400;white-space:nowrap;transform:scaleX(0.9962);transform-origin:0 0;">Ince, Harry</div><div style="position:absolute;left:98px;top:479.45px;font-size:7.4px;line-height:7.4px;color:#9a9a9a;font-weight:400;white-space:nowrap;transform:scaleX(1.0237);transform-origin:0 0;">M, 34Y</div><div style="position:absolute;left:98px;top:489.39px;font-size:7.6px;line-height:7.6px;color:#222;font-weight:400;white-space:nowrap;transform:scaleX(1.0970);transform-origin:0 0;">Omni Alpha Clinic</div><div style="position:absolute;left:98px;top:498.84px;font-size:7.9px;line-height:7.9px;color:#222;font-weight:400;white-space:nowrap;transform:scaleX(1.0576);transform-origin:0 0;">10:30 AM To 11:00 AM</div><div style="position:absolute;left:342.4px;top:478.40000000000003px;width:152px;height:24.2px;background:#fff;border:1px solid #c2c4c7;border-radius:3px 0 0 3px;box-sizing:border-box"></div><div style="position:absolute;left:494.3px;top:478.8px;width:18px;height:24.4px;background:#eceef0;border:1px solid #e0e2e4;border-left:none;border-radius:0 3px 3px 0;box-sizing:border-box"></div><div style="position:absolute;left:347.6px;top:486.33px;font-size:10.8px;line-height:10.8px;color:#383838;font-weight:400;white-space:nowrap;transform:scaleX(0.9249);transform-origin:0 0;">Grissom, Margaret</div><svg style="position:absolute;left:497px;top:484.20000000000005px" width="12" height="12" viewBox="0 0 12 12"><circle cx="5.2" cy="5.2" r="3.5" fill="none" stroke="#333" stroke-width="1.2"/><path d="M7.8 7.8l2.4 2.4" stroke="#333" stroke-width="1.4"/></svg><svg style="position:absolute;left:531.0px;top:482.2px" width="18" height="20" viewBox="0 0 18 20"><path d="M8.6 2.7c.8 0 1.4.5 1.4 1.2v.6c2.6.7 4 3 4 6v3.4l1.8 2.2V17H1.3v-.9l1.9-2.2v-3.4c0-3 1.4-5.3 4-6v-.6c0-.7.6-1.2 1.4-1.2z" fill="#111"/><rect x="7.6" y="7.8" width="2.2" height="6.2" fill="#fff"/><rect x="5.6" y="9.8" width="6.2" height="2.2" fill="#fff"/><rect x="7.5" y="17" width="2.2" height="2.5" rx=".6" fill="#111"/></svg><svg style="position:absolute;left:576.08px;top:482.2px" width="18" height="20" viewBox="0 0 18 20"><rect x="6.8" y="1.8" width="4.3" height="3.3" rx="1.3" fill="#8fd69b"/><path d="M6.8 4.6h4.3v2.3c0 1-.4 1.7-.9 2.3H7.7c-.5-.6-.9-1.3-.9-2.3z" fill="#20ba3b"/><path d="M7.2 9c-2.6.3-4.2 1.5-4.2 3.5v4.7h12.3v-4.7c0-2-1.6-3.2-4.2-3.5z" fill="#20ba3b"/><path d="M2.8 14.7l9.2-4.9" stroke="#fff" stroke-width="1"/><path d="M12.7 10.3l-3 7.2" stroke="#fff" stroke-width="1"/><path d="M7.4 15.4l2 2" stroke="#fff" stroke-width=".8"/></svg><svg style="position:absolute;left:621.16px;top:482.2px" width="18" height="20" viewBox="0 0 18 20"><polygon points="8.64,1.40 9.38,1.66 10.01,2.28 10.52,2.96 11.03,3.38 11.69,3.44 12.53,3.33 13.42,3.33 14.12,3.67 14.46,4.37 14.46,5.26 14.35,6.10 14.41,6.76 14.83,7.27 15.51,7.78 16.13,8.41 16.39,9.15 16.13,9.89 15.51,10.52 14.83,11.03 14.41,11.54 14.35,12.20 14.46,13.04 14.46,13.93 14.12,14.63 13.42,14.97 12.53,14.97 11.69,14.86 11.03,14.92 10.52,15.34 10.01,16.02 9.38,16.64 8.64,16.90 7.90,16.64 7.27,16.02 6.76,15.34 6.25,14.92 5.59,14.86 4.75,14.97 3.86,14.97 3.16,14.63 2.82,13.93 2.82,13.04 2.93,12.20 2.87,11.54 2.45,11.03 1.77,10.52 1.15,9.89 0.89,9.15 1.15,8.41 1.77,7.78 2.45,7.27 2.87,6.76 2.93,6.10 2.82,5.26 2.82,4.37 3.16,3.67 3.86,3.33 4.75,3.33 5.59,3.44 6.25,3.38 6.76,2.96 7.27,2.28 7.90,1.66" fill="none" stroke="#2a2a2a" stroke-width="1.15" stroke-linejoin="round"/><path d="M10.5 6.6c-.4-.7-1-1-1.9-1-1 0-1.8.6-1.8 1.5 0 2 3.8 1.4 3.8 3.6 0 1-.9 1.6-2 1.6-1 0-1.7-.4-2.1-1.1" fill="none" stroke="#111" stroke-width="1.3"/><path d="M8.6 4.6v1M8.6 12.3v1" stroke="#111" stroke-width="1.1"/></svg><svg style="position:absolute;left:666.24px;top:482.2px" width="18" height="20" viewBox="0 0 18 20"><circle cx="8.76" cy="9" r="8" fill="#050505"/><path d="M3.3 8.2l4.4 4.1 6.4-6.3" stroke="#fff" stroke-width="1.5" fill="none" stroke-linecap="round" stroke-linejoin="miter"/></svg><svg style="position:absolute;left:711.32px;top:482.2px" width="18" height="20" viewBox="0 0 18 20"><rect x="2.7" y="3.7" width="14.1" height="11.5" rx="2" fill="none" stroke="#2b2b2b" stroke-width="1.5"/><rect x="3.2" y="7.2" width="2.4" height="2.2" fill="#050505"/><rect x="13.8" y="7.2" width="2.4" height="2.2" fill="#050505"/><path d="M11.6 7.2c-.4-.7-1-1-1.8-1-1.3 0-2.2 1-2.2 2.4s.9 2.4 2.2 2.4c.8 0 1.4-.3 1.8-1" fill="none" stroke="#111" stroke-width="1.3"/><path d="M4.4 12.8h5" stroke="#9a9a9a" stroke-width=".8" stroke-dasharray="1 .6"/></svg><svg style="position:absolute;left:756.4px;top:482.2px" width="18" height="20" viewBox="0 0 18 20"><path d="M4.2 1.2h7.2l4.4 4.4v10c0 1.1-.9 2-2 2H4.2c-1.1 0-2-.9-2-2V3.2c0-1.1.9-2 2-2z" fill="none" stroke="#22bb44" stroke-width="1.7" stroke-linejoin="round"/><path d="M11.2 1.6v3.4c0 .5.3.8.8.8h3.4" fill="none" stroke="#22bb44" stroke-width="1.4"/><path d="M9.2 9.4h3.8M9.2 11.9h3.8" stroke="#3cc25a" stroke-width="1.1"/><path d="M9.2 14.3h3.8" stroke="#a9dcb4" stroke-width="1"/><path d="M6.6 8.2c-.6 0-1.2.4-1.2 1.1 0 1.4 2.4 1 2.4 2.6 0 .7-.6 1.1-1.2 1.1s-1.1-.3-1.3-.8M6.5 7.4v.8M6.5 13v.9" fill="none" stroke="#3cc25a" stroke-width=".9"/></svg><svg style="position:absolute;left:801.48px;top:482.2px" width="18" height="20" viewBox="0 0 18 20"><path d="M9 1.3C11 1.3 12 3.2 12.2 5.6 12.4 7.4 13.2 8.2 14.4 8.9 15.6 9.6 15.6 11.6 14 11.7 12.8 11.8 12 11.4 11.4 11 11 12.2 10 12.5 9 12.5S7 12.2 6.6 11C6 11.4 5.2 11.8 4 11.7 2.4 11.6 2.4 9.6 3.6 8.9 4.8 8.2 5.6 7.4 5.8 5.6 6 3.2 7 1.3 9 1.3z" fill="#050505"/><circle cx="2.3" cy="3.95" r="1.1" fill="#111"/><circle cx="15.8" cy="5.55" r="1.1" fill="#111"/><circle cx="2.3" cy="14.55" r="1.15" fill="#111"/><circle cx="6.8" cy="14.95" r=".95" fill="#555"/><circle cx="11.8" cy="14.95" r=".95" fill="#555"/><circle cx="9" cy="16.95" r=".9" fill="#666"/></svg><svg style="position:absolute;left:846.56px;top:482.2px" width="18" height="20" viewBox="0 0 18 20"><path d="M14.3 5.2A7.3 7.3 0 1 1 9.2 2.3" fill="none" stroke="#111" stroke-width="1.6"/><path d="M11.6 1.8l5 .1-1.4 4.4z" fill="#111"/><path d="M8.4 5.8v4.6h2.8" fill="none" stroke="#111" stroke-width="1.7"/></svg><svg style="position:absolute;left:891.64px;top:482.2px" width="18" height="20" viewBox="0 0 18 20"><path d="M8.66 2.1l6.2 2.3v4.8c0 3.8-2.6 6.6-6.2 7.8-3.6-1.2-6.2-4-6.2-7.8V4.4z" fill="#22bb44"/><path d="M5.2 10.3l2.2 2.1 4.6-4.9" stroke="#fff" stroke-width="1.6" fill="none"/></svg><svg style="position:absolute;left:936.72px;top:482.2px" width="18" height="20" viewBox="0 0 18 20"><circle cx="8.58" cy="9.35" r="7.5" fill="#fff" stroke="#050505" stroke-width="1.6"/><path d="M1.08 9.65h15a7.5 7.5 0 0 1-15 0z" fill="#050505"/></svg><svg style="position:absolute;left:981.8px;top:482.2px" width="18" height="20" viewBox="0 0 18 20"><path d="M3.6 1.8h6.8l4.8 4.8v8.8c0 .9-.7 1.6-1.6 1.6H3.6c-.9 0-1.6-.7-1.6-1.6V3.4c0-.9.7-1.6 1.6-1.6z" fill="none" stroke="#111" stroke-width="1.6" stroke-linejoin="round"/><path d="M10.2 2v3.6c0 .6.4 1 1 1h3.8" fill="none" stroke="#111" stroke-width="1.3"/><path d="M4.4 11.6h7.4" stroke="#888" stroke-width="1"/><path d="M4.8 14h7" stroke="#bbb" stroke-width="1.4"/></svg><svg style="position:absolute;left:1026.88px;top:482.2px" width="18" height="20" viewBox="0 0 18 20"><path d="M3.6 1.9h6.8l4.7 4.7v8.9c0 .9-.7 1.6-1.6 1.6H3.6c-.9 0-1.6-.7-1.6-1.6V3.5c0-.9.7-1.6 1.6-1.6z" fill="none" stroke="#111" stroke-width="1.6" stroke-linejoin="round"/><path d="M10.2 2.1v3.6c0 .6.4 1 1 1h3.7" fill="none" stroke="#111" stroke-width="1.3"/><path d="M4.6 9.7h2.6M10.6 9.7h1.4" stroke="#333" stroke-width="1"/><path d="M4.6 12h7.6" stroke="#777" stroke-width="1.1"/><path d="M4.6 14.2h1.8M10.4 14.2h1.6" stroke="#aaa" stroke-width=".9"/></svg><svg style="position:absolute;left:1071.96px;top:482.2px" width="18" height="20" viewBox="0 0 18 20"><path d="M3.6 1h9.9v2.4h-2v4l5.2 9.6H0.4l5.2-9.6v-4h-2z" fill="#050505"/><path d="M6.9 7.9L2.9 15.5h11.3l-4-7.6z" fill="#fff"/><circle cx="8.04" cy="10.95" r=".8" fill="#555"/><circle cx="9.84" cy="13.15" r="1.05" fill="#111"/></svg><svg style="position:absolute;left:1496.8px;top:481.85px" width="6" height="14" viewBox="0 0 6 14"><circle cx="3" cy="2.55" r="1.2" fill="#111"/><circle cx="3" cy="7" r="1.2" fill="#111"/><circle cx="3" cy="11.45" r="1.2" fill="#111"/></svg><div style="position:absolute;left:52px;top:515.7px;width:1464.6px;height:50.1px;background:#fff;border:1.5px solid #e3e4e7;border-left:none;border-radius:0 4px 4px 0;box-sizing:border-box"></div><div style="position:absolute;left:52px;top:516.0px;width:8px;height:49.5px;background:#ee9a9c"></div><div style="position:absolute;left:63.2px;top:519.8px;width:31.6px;height:35.5px;border:1px solid #e8e8e8;box-sizing:border-box;background:#fff"></div><svg style="position:absolute;left:64.60000000000001px;top:520.8px" width="29" height="34" viewBox="0 0 29 34"><defs><radialGradient id="sk" cx="0.5" cy="0.35" r="0.75"><stop offset="0" stop-color="#fde6cc"/><stop offset="0.55" stop-color="#ebbf98"/><stop offset="1" stop-color="#c48c62"/></radialGradient><linearGradient id="sh" x1="0" y1="0" x2="0" y2="1"><stop offset="0" stop-color="#eef9fd"/><stop offset="1" stop-color="#c4e3ef"/></linearGradient><linearGradient id="hr" x1="0" y1="0" x2="1" y2="1"><stop offset="0" stop-color="#7a4322"/><stop offset="1" stop-color="#3c1d0a"/></linearGradient></defs><path d="M1.4 32.2c-.4-7.4 3.4-12.2 9.2-14.4l3 1 3.4-1c6.2 2 10.6 6.6 10.2 14.4z" fill="url(#sh)"/><path d="M9.8 15.6h5.8v4l-2.9 2-2.9-2z" fill="#d7a078"/><ellipse cx="12.6" cy="10.6" rx="6.1" ry="8.6" fill="url(#sk)"/><path d="M6.4 9.6C5.6 3.4 8.4.3 12.8.3c4.4 0 7.4 2.8 6.8 8.4-.2 1.4-.6 2.2-1.2 2.8-.2-2.6-1-4.4-2.2-5.2-1.8 1-4.2 1.2-6.2.6-1.6.4-3 1.4-3.6 2.7z" fill="url(#hr)"/><path d="M10.4 21.6h3.2l-.6 11.2H8.6z" fill="#0a2650"/></svg><div style="position:absolute;left:98px;top:520.58px;font-size:11.7px;line-height:11.7px;color:#2fb3d2;font-weight:400;white-space:nowrap;transform:scaleX(0.9673);transform-origin:0 0;">Davidson, Sally</div><div style="position:absolute;left:98px;top:534.15px;font-size:7.4px;line-height:7.4px;color:#9a9a9a;font-weight:400;white-space:nowrap;transform:scaleX(1.0237);transform-origin:0 0;">M, 34Y</div><div style="position:absolute;left:98px;top:544.09px;font-size:7.6px;line-height:7.6px;color:#222;font-weight:400;white-space:nowrap;transform:scaleX(1.0970);transform-origin:0 0;">Omni Alpha Clinic</div><div style="position:absolute;left:98px;top:553.54px;font-size:7.9px;line-height:7.9px;color:#222;font-weight:400;white-space:nowrap;transform:scaleX(1.0655);transform-origin:0 0;">11:30 AM To 11:45 AM</div><div style="position:absolute;left:342.4px;top:533.1px;width:152px;height:24.2px;background:#fff;border:1px solid #c2c4c7;border-radius:3px 0 0 3px;box-sizing:border-box"></div><div style="position:absolute;left:494.3px;top:533.5px;width:18px;height:24.4px;background:#eceef0;border:1px solid #e0e2e4;border-left:none;border-radius:0 3px 3px 0;box-sizing:border-box"></div><div style="position:absolute;left:347.6px;top:541.03px;font-size:10.8px;line-height:10.8px;color:#383838;font-weight:400;white-space:nowrap;transform:scaleX(0.9249);transform-origin:0 0;">Grissom, Margaret</div><svg style="position:absolute;left:497px;top:538.9px" width="12" height="12" viewBox="0 0 12 12"><circle cx="5.2" cy="5.2" r="3.5" fill="none" stroke="#333" stroke-width="1.2"/><path d="M7.8 7.8l2.4 2.4" stroke="#333" stroke-width="1.4"/></svg><svg style="position:absolute;left:531.0px;top:534.05px" width="18" height="20" viewBox="0 0 18 20"><path d="M8.6 2.7c.8 0 1.4.5 1.4 1.2v.6c2.6.7 4 3 4 6v3.4l1.8 2.2V17H1.3v-.9l1.9-2.2v-3.4c0-3 1.4-5.3 4-6v-.6c0-.7.6-1.2 1.4-1.2z" fill="#111"/><rect x="7.6" y="7.8" width="2.2" height="6.2" fill="#fff"/><rect x="5.6" y="9.8" width="6.2" height="2.2" fill="#fff"/><rect x="7.5" y="17" width="2.2" height="2.5" rx=".6" fill="#111"/></svg><svg style="position:absolute;left:576.08px;top:534.05px" width="18" height="20" viewBox="0 0 18 20"><rect x="6.8" y="1.8" width="4.3" height="3.3" rx="1.3" fill="#8fd69b"/><path d="M6.8 4.6h4.3v2.3c0 1-.4 1.7-.9 2.3H7.7c-.5-.6-.9-1.3-.9-2.3z" fill="#20ba3b"/><path d="M7.2 9c-2.6.3-4.2 1.5-4.2 3.5v4.7h12.3v-4.7c0-2-1.6-3.2-4.2-3.5z" fill="#20ba3b"/><path d="M2.8 14.7l9.2-4.9" stroke="#fff" stroke-width="1"/><path d="M12.7 10.3l-3 7.2" stroke="#fff" stroke-width="1"/><path d="M7.4 15.4l2 2" stroke="#fff" stroke-width=".8"/></svg><svg style="position:absolute;left:621.16px;top:534.05px" width="18" height="20" viewBox="0 0 18 20"><polygon points="8.64,1.40 9.38,1.66 10.01,2.28 10.52,2.96 11.03,3.38 11.69,3.44 12.53,3.33 13.42,3.33 14.12,3.67 14.46,4.37 14.46,5.26 14.35,6.10 14.41,6.76 14.83,7.27 15.51,7.78 16.13,8.41 16.39,9.15 16.13,9.89 15.51,10.52 14.83,11.03 14.41,11.54 14.35,12.20 14.46,13.04 14.46,13.93 14.12,14.63 13.42,14.97 12.53,14.97 11.69,14.86 11.03,14.92 10.52,15.34 10.01,16.02 9.38,16.64 8.64,16.90 7.90,16.64 7.27,16.02 6.76,15.34 6.25,14.92 5.59,14.86 4.75,14.97 3.86,14.97 3.16,14.63 2.82,13.93 2.82,13.04 2.93,12.20 2.87,11.54 2.45,11.03 1.77,10.52 1.15,9.89 0.89,9.15 1.15,8.41 1.77,7.78 2.45,7.27 2.87,6.76 2.93,6.10 2.82,5.26 2.82,4.37 3.16,3.67 3.86,3.33 4.75,3.33 5.59,3.44 6.25,3.38 6.76,2.96 7.27,2.28 7.90,1.66" fill="none" stroke="#2a2a2a" stroke-width="1.15" stroke-linejoin="round"/><path d="M10.5 6.6c-.4-.7-1-1-1.9-1-1 0-1.8.6-1.8 1.5 0 2 3.8 1.4 3.8 3.6 0 1-.9 1.6-2 1.6-1 0-1.7-.4-2.1-1.1" fill="none" stroke="#111" stroke-width="1.3"/><path d="M8.6 4.6v1M8.6 12.3v1" stroke="#111" stroke-width="1.1"/></svg><svg style="position:absolute;left:666.24px;top:534.05px" width="18" height="20" viewBox="0 0 18 20"><circle cx="8.76" cy="9" r="8" fill="#050505"/><path d="M3.3 8.2l4.4 4.1 6.4-6.3" stroke="#fff" stroke-width="1.5" fill="none" stroke-linecap="round" stroke-linejoin="miter"/></svg><svg style="position:absolute;left:711.32px;top:534.05px" width="18" height="20" viewBox="0 0 18 20"><rect x="2.7" y="3.7" width="14.1" height="11.5" rx="2" fill="none" stroke="#2b2b2b" stroke-width="1.5"/><rect x="3.2" y="7.2" width="2.4" height="2.2" fill="#050505"/><rect x="13.8" y="7.2" width="2.4" height="2.2" fill="#050505"/><path d="M11.6 7.2c-.4-.7-1-1-1.8-1-1.3 0-2.2 1-2.2 2.4s.9 2.4 2.2 2.4c.8 0 1.4-.3 1.8-1" fill="none" stroke="#111" stroke-width="1.3"/><path d="M4.4 12.8h5" stroke="#9a9a9a" stroke-width=".8" stroke-dasharray="1 .6"/></svg><svg style="position:absolute;left:756.4px;top:534.05px" width="18" height="20" viewBox="0 0 18 20"><path d="M4.2 1.2h7.2l4.4 4.4v10c0 1.1-.9 2-2 2H4.2c-1.1 0-2-.9-2-2V3.2c0-1.1.9-2 2-2z" fill="none" stroke="#22bb44" stroke-width="1.7" stroke-linejoin="round"/><path d="M11.2 1.6v3.4c0 .5.3.8.8.8h3.4" fill="none" stroke="#22bb44" stroke-width="1.4"/><path d="M9.2 9.4h3.8M9.2 11.9h3.8" stroke="#3cc25a" stroke-width="1.1"/><path d="M9.2 14.3h3.8" stroke="#a9dcb4" stroke-width="1"/><path d="M6.6 8.2c-.6 0-1.2.4-1.2 1.1 0 1.4 2.4 1 2.4 2.6 0 .7-.6 1.1-1.2 1.1s-1.1-.3-1.3-.8M6.5 7.4v.8M6.5 13v.9" fill="none" stroke="#3cc25a" stroke-width=".9"/></svg><svg style="position:absolute;left:801.48px;top:534.05px" width="18" height="20" viewBox="0 0 18 20"><path d="M9 1.3C11 1.3 12 3.2 12.2 5.6 12.4 7.4 13.2 8.2 14.4 8.9 15.6 9.6 15.6 11.6 14 11.7 12.8 11.8 12 11.4 11.4 11 11 12.2 10 12.5 9 12.5S7 12.2 6.6 11C6 11.4 5.2 11.8 4 11.7 2.4 11.6 2.4 9.6 3.6 8.9 4.8 8.2 5.6 7.4 5.8 5.6 6 3.2 7 1.3 9 1.3z" fill="#050505"/><circle cx="2.3" cy="3.95" r="1.1" fill="#111"/><circle cx="15.8" cy="5.55" r="1.1" fill="#111"/><circle cx="2.3" cy="14.55" r="1.15" fill="#111"/><circle cx="6.8" cy="14.95" r=".95" fill="#555"/><circle cx="11.8" cy="14.95" r=".95" fill="#555"/><circle cx="9" cy="16.95" r=".9" fill="#666"/></svg><svg style="position:absolute;left:846.56px;top:534.05px" width="18" height="20" viewBox="0 0 18 20"><path d="M14.3 5.2A7.3 7.3 0 1 1 9.2 2.3" fill="none" stroke="#111" stroke-width="1.6"/><path d="M11.6 1.8l5 .1-1.4 4.4z" fill="#111"/><path d="M8.4 5.8v4.6h2.8" fill="none" stroke="#111" stroke-width="1.7"/></svg><svg style="position:absolute;left:891.64px;top:534.05px" width="18" height="20" viewBox="0 0 18 20"><path d="M8.66 2.1l6.2 2.3v4.8c0 3.8-2.6 6.6-6.2 7.8-3.6-1.2-6.2-4-6.2-7.8V4.4z" fill="#22bb44"/><path d="M5.2 10.3l2.2 2.1 4.6-4.9" stroke="#fff" stroke-width="1.6" fill="none"/></svg><svg style="position:absolute;left:936.72px;top:534.05px" width="18" height="20" viewBox="0 0 18 20"><circle cx="8.58" cy="9.35" r="7.5" fill="#fff" stroke="#050505" stroke-width="1.6"/><path d="M1.08 9.65h15a7.5 7.5 0 0 1-15 0z" fill="#050505"/></svg><svg style="position:absolute;left:981.8px;top:534.05px" width="18" height="20" viewBox="0 0 18 20"><path d="M3.6 1.8h6.8l4.8 4.8v8.8c0 .9-.7 1.6-1.6 1.6H3.6c-.9 0-1.6-.7-1.6-1.6V3.4c0-.9.7-1.6 1.6-1.6z" fill="none" stroke="#111" stroke-width="1.6" stroke-linejoin="round"/><path d="M10.2 2v3.6c0 .6.4 1 1 1h3.8" fill="none" stroke="#111" stroke-width="1.3"/><path d="M4.4 11.6h7.4" stroke="#888" stroke-width="1"/><path d="M4.8 14h7" stroke="#bbb" stroke-width="1.4"/></svg><svg style="position:absolute;left:1026.88px;top:534.05px" width="18" height="20" viewBox="0 0 18 20"><path d="M3.6 1.9h6.8l4.7 4.7v8.9c0 .9-.7 1.6-1.6 1.6H3.6c-.9 0-1.6-.7-1.6-1.6V3.5c0-.9.7-1.6 1.6-1.6z" fill="none" stroke="#111" stroke-width="1.6" stroke-linejoin="round"/><path d="M10.2 2.1v3.6c0 .6.4 1 1 1h3.7" fill="none" stroke="#111" stroke-width="1.3"/><path d="M4.6 9.7h2.6M10.6 9.7h1.4" stroke="#333" stroke-width="1"/><path d="M4.6 12h7.6" stroke="#777" stroke-width="1.1"/><path d="M4.6 14.2h1.8M10.4 14.2h1.6" stroke="#aaa" stroke-width=".9"/></svg><svg style="position:absolute;left:1071.96px;top:534.05px" width="18" height="20" viewBox="0 0 18 20"><path d="M3.6 1h9.9v2.4h-2v4l5.2 9.6H0.4l5.2-9.6v-4h-2z" fill="#050505"/><path d="M6.9 7.9L2.9 15.5h11.3l-4-7.6z" fill="#fff"/><circle cx="8.04" cy="10.95" r=".8" fill="#555"/><circle cx="9.84" cy="13.15" r="1.05" fill="#111"/></svg><svg style="position:absolute;left:1496.8px;top:536.55px" width="6" height="14" viewBox="0 0 6 14"><circle cx="3" cy="2.55" r="1.2" fill="#111"/><circle cx="3" cy="7" r="1.2" fill="#111"/><circle cx="3" cy="11.45" r="1.2" fill="#111"/></svg><div style="position:absolute;left:52px;top:571.1px;width:1464.6px;height:50.1px;background:#fff;border:1.5px solid #e3e4e7;border-left:none;border-radius:0 4px 4px 0;box-sizing:border-box"></div><div style="position:absolute;left:52px;top:571.4px;width:8px;height:49.5px;background:#a6ead2"></div><div style="position:absolute;left:63.2px;top:575.1999999999999px;width:31.6px;height:35.5px;border:1px solid #e8e8e8;box-sizing:border-box;background:#fff"></div><svg style="position:absolute;left:64.60000000000001px;top:576.1999999999999px" width="29" height="34" viewBox="0 0 29 34"><defs><radialGradient id="sk" cx="0.5" cy="0.35" r="0.75"><stop offset="0" stop-color="#fde6cc"/><stop offset="0.55" stop-color="#ebbf98"/><stop offset="1" stop-color="#c48c62"/></radialGradient><linearGradient id="sh" x1="0" y1="0" x2="0" y2="1"><stop offset="0" stop-color="#eef9fd"/><stop offset="1" stop-color="#c4e3ef"/></linearGradient><linearGradient id="hr" x1="0" y1="0" x2="1" y2="1"><stop offset="0" stop-color="#7a4322"/><stop offset="1" stop-color="#3c1d0a"/></linearGradient></defs><path d="M1.4 32.2c-.4-7.4 3.4-12.2 9.2-14.4l3 1 3.4-1c6.2 2 10.6 6.6 10.2 14.4z" fill="url(#sh)"/><path d="M9.8 15.6h5.8v4l-2.9 2-2.9-2z" fill="#d7a078"/><ellipse cx="12.6" cy="10.6" rx="6.1" ry="8.6" fill="url(#sk)"/><path d="M6.4 9.6C5.6 3.4 8.4.3 12.8.3c4.4 0 7.4 2.8 6.8 8.4-.2 1.4-.6 2.2-1.2 2.8-.2-2.6-1-4.4-2.2-5.2-1.8 1-4.2 1.2-6.2.6-1.6.4-3 1.4-3.6 2.7z" fill="url(#hr)"/><path d="M10.4 21.6h3.2l-.6 11.2H8.6z" fill="#0a2650"/></svg><div style="position:absolute;left:98px;top:575.98px;font-size:11.7px;line-height:11.7px;color:#2fb3d2;font-weight:400;white-space:nowrap;transform:scaleX(0.9959);transform-origin:0 0;">Mackay, Michelle</div><div style="position:absolute;left:98px;top:589.55px;font-size:7.4px;line-height:7.4px;color:#9a9a9a;font-weight:400;white-space:nowrap;transform:scaleX(1.1440);transform-origin:0 0;">F, 39Y</div><div style="position:absolute;left:98px;top:599.49px;font-size:7.6px;line-height:7.6px;color:#222;font-weight:400;white-space:nowrap;transform:scaleX(1.0970);transform-origin:0 0;">Omni Alpha Clinic</div><div style="position:absolute;left:98px;top:608.94px;font-size:7.9px;line-height:7.9px;color:#222;font-weight:400;white-space:nowrap;transform:scaleX(1.0384);transform-origin:0 0;">12:30 PM To 01:15 PM</div><div style="position:absolute;left:342.4px;top:588.5px;width:152px;height:24.2px;background:#fff;border:1px solid #c2c4c7;border-radius:3px 0 0 3px;box-sizing:border-box"></div><div style="position:absolute;left:494.3px;top:588.9px;width:18px;height:24.4px;background:#eceef0;border:1px solid #e0e2e4;border-left:none;border-radius:0 3px 3px 0;box-sizing:border-box"></div><div style="position:absolute;left:347.6px;top:596.43px;font-size:10.8px;line-height:10.8px;color:#383838;font-weight:400;white-space:nowrap;transform:scaleX(0.9249);transform-origin:0 0;">Grissom, Margaret</div><svg style="position:absolute;left:497px;top:594.3px" width="12" height="12" viewBox="0 0 12 12"><circle cx="5.2" cy="5.2" r="3.5" fill="none" stroke="#333" stroke-width="1.2"/><path d="M7.8 7.8l2.4 2.4" stroke="#333" stroke-width="1.4"/></svg><svg style="position:absolute;left:531.0px;top:589.05px" width="18" height="20" viewBox="0 0 18 20"><path d="M8.6 2.7c.8 0 1.4.5 1.4 1.2v.6c2.6.7 4 3 4 6v3.4l1.8 2.2V17H1.3v-.9l1.9-2.2v-3.4c0-3 1.4-5.3 4-6v-.6c0-.7.6-1.2 1.4-1.2z" fill="#111"/><rect x="7.6" y="7.8" width="2.2" height="6.2" fill="#fff"/><rect x="5.6" y="9.8" width="6.2" height="2.2" fill="#fff"/><rect x="7.5" y="17" width="2.2" height="2.5" rx=".6" fill="#111"/></svg><svg style="position:absolute;left:576.08px;top:589.05px" width="18" height="20" viewBox="0 0 18 20"><rect x="6.8" y="1.8" width="4.3" height="3.3" rx="1.3" fill="#8fd69b"/><path d="M6.8 4.6h4.3v2.3c0 1-.4 1.7-.9 2.3H7.7c-.5-.6-.9-1.3-.9-2.3z" fill="#20ba3b"/><path d="M7.2 9c-2.6.3-4.2 1.5-4.2 3.5v4.7h12.3v-4.7c0-2-1.6-3.2-4.2-3.5z" fill="#20ba3b"/><path d="M2.8 14.7l9.2-4.9" stroke="#fff" stroke-width="1"/><path d="M12.7 10.3l-3 7.2" stroke="#fff" stroke-width="1"/><path d="M7.4 15.4l2 2" stroke="#fff" stroke-width=".8"/></svg><svg style="position:absolute;left:621.16px;top:589.05px" width="18" height="20" viewBox="0 0 18 20"><polygon points="8.64,1.40 9.38,1.66 10.01,2.28 10.52,2.96 11.03,3.38 11.69,3.44 12.53,3.33 13.42,3.33 14.12,3.67 14.46,4.37 14.46,5.26 14.35,6.10 14.41,6.76 14.83,7.27 15.51,7.78 16.13,8.41 16.39,9.15 16.13,9.89 15.51,10.52 14.83,11.03 14.41,11.54 14.35,12.20 14.46,13.04 14.46,13.93 14.12,14.63 13.42,14.97 12.53,14.97 11.69,14.86 11.03,14.92 10.52,15.34 10.01,16.02 9.38,16.64 8.64,16.90 7.90,16.64 7.27,16.02 6.76,15.34 6.25,14.92 5.59,14.86 4.75,14.97 3.86,14.97 3.16,14.63 2.82,13.93 2.82,13.04 2.93,12.20 2.87,11.54 2.45,11.03 1.77,10.52 1.15,9.89 0.89,9.15 1.15,8.41 1.77,7.78 2.45,7.27 2.87,6.76 2.93,6.10 2.82,5.26 2.82,4.37 3.16,3.67 3.86,3.33 4.75,3.33 5.59,3.44 6.25,3.38 6.76,2.96 7.27,2.28 7.90,1.66" fill="none" stroke="#2a2a2a" stroke-width="1.15" stroke-linejoin="round"/><path d="M10.5 6.6c-.4-.7-1-1-1.9-1-1 0-1.8.6-1.8 1.5 0 2 3.8 1.4 3.8 3.6 0 1-.9 1.6-2 1.6-1 0-1.7-.4-2.1-1.1" fill="none" stroke="#111" stroke-width="1.3"/><path d="M8.6 4.6v1M8.6 12.3v1" stroke="#111" stroke-width="1.1"/></svg><svg style="position:absolute;left:666.24px;top:589.05px" width="18" height="20" viewBox="0 0 18 20"><circle cx="8.76" cy="9" r="8" fill="#050505"/><path d="M3.3 8.2l4.4 4.1 6.4-6.3" stroke="#fff" stroke-width="1.5" fill="none" stroke-linecap="round" stroke-linejoin="miter"/></svg><svg style="position:absolute;left:711.32px;top:589.05px" width="18" height="20" viewBox="0 0 18 20"><rect x="2.7" y="3.7" width="14.1" height="11.5" rx="2" fill="none" stroke="#2b2b2b" stroke-width="1.5"/><rect x="3.2" y="7.2" width="2.4" height="2.2" fill="#050505"/><rect x="13.8" y="7.2" width="2.4" height="2.2" fill="#050505"/><path d="M11.6 7.2c-.4-.7-1-1-1.8-1-1.3 0-2.2 1-2.2 2.4s.9 2.4 2.2 2.4c.8 0 1.4-.3 1.8-1" fill="none" stroke="#111" stroke-width="1.3"/><path d="M4.4 12.8h5" stroke="#9a9a9a" stroke-width=".8" stroke-dasharray="1 .6"/></svg><svg style="position:absolute;left:756.4px;top:589.05px" width="18" height="20" viewBox="0 0 18 20"><path d="M4.2 1.2h7.2l4.4 4.4v10c0 1.1-.9 2-2 2H4.2c-1.1 0-2-.9-2-2V3.2c0-1.1.9-2 2-2z" fill="none" stroke="#22bb44" stroke-width="1.7" stroke-linejoin="round"/><path d="M11.2 1.6v3.4c0 .5.3.8.8.8h3.4" fill="none" stroke="#22bb44" stroke-width="1.4"/><path d="M9.2 9.4h3.8M9.2 11.9h3.8" stroke="#3cc25a" stroke-width="1.1"/><path d="M9.2 14.3h3.8" stroke="#a9dcb4" stroke-width="1"/><path d="M6.6 8.2c-.6 0-1.2.4-1.2 1.1 0 1.4 2.4 1 2.4 2.6 0 .7-.6 1.1-1.2 1.1s-1.1-.3-1.3-.8M6.5 7.4v.8M6.5 13v.9" fill="none" stroke="#3cc25a" stroke-width=".9"/></svg><svg style="position:absolute;left:801.48px;top:589.05px" width="18" height="20" viewBox="0 0 18 20"><path d="M9 1.3C11 1.3 12 3.2 12.2 5.6 12.4 7.4 13.2 8.2 14.4 8.9 15.6 9.6 15.6 11.6 14 11.7 12.8 11.8 12 11.4 11.4 11 11 12.2 10 12.5 9 12.5S7 12.2 6.6 11C6 11.4 5.2 11.8 4 11.7 2.4 11.6 2.4 9.6 3.6 8.9 4.8 8.2 5.6 7.4 5.8 5.6 6 3.2 7 1.3 9 1.3z" fill="#050505"/><circle cx="2.3" cy="3.95" r="1.1" fill="#111"/><circle cx="15.8" cy="5.55" r="1.1" fill="#111"/><circle cx="2.3" cy="14.55" r="1.15" fill="#111"/><circle cx="6.8" cy="14.95" r=".95" fill="#555"/><circle cx="11.8" cy="14.95" r=".95" fill="#555"/><circle cx="9" cy="16.95" r=".9" fill="#666"/></svg><svg style="position:absolute;left:846.56px;top:589.05px" width="18" height="20" viewBox="0 0 18 20"><path d="M14.3 5.2A7.3 7.3 0 1 1 9.2 2.3" fill="none" stroke="#111" stroke-width="1.6"/><path d="M11.6 1.8l5 .1-1.4 4.4z" fill="#111"/><path d="M8.4 5.8v4.6h2.8" fill="none" stroke="#111" stroke-width="1.7"/></svg><svg style="position:absolute;left:891.64px;top:589.05px" width="18" height="20" viewBox="0 0 18 20"><path d="M8.66 2.1l6.2 2.3v4.8c0 3.8-2.6 6.6-6.2 7.8-3.6-1.2-6.2-4-6.2-7.8V4.4z" fill="#22bb44"/><path d="M5.2 10.3l2.2 2.1 4.6-4.9" stroke="#fff" stroke-width="1.6" fill="none"/></svg><svg style="position:absolute;left:936.72px;top:589.05px" width="18" height="20" viewBox="0 0 18 20"><circle cx="8.58" cy="9.35" r="7.5" fill="#fff" stroke="#050505" stroke-width="1.6"/><path d="M1.08 9.65h15a7.5 7.5 0 0 1-15 0z" fill="#050505"/></svg><svg style="position:absolute;left:981.8px;top:589.05px" width="18" height="20" viewBox="0 0 18 20"><path d="M3.6 1.8h6.8l4.8 4.8v8.8c0 .9-.7 1.6-1.6 1.6H3.6c-.9 0-1.6-.7-1.6-1.6V3.4c0-.9.7-1.6 1.6-1.6z" fill="none" stroke="#111" stroke-width="1.6" stroke-linejoin="round"/><path d="M10.2 2v3.6c0 .6.4 1 1 1h3.8" fill="none" stroke="#111" stroke-width="1.3"/><path d="M4.4 11.6h7.4" stroke="#888" stroke-width="1"/><path d="M4.8 14h7" stroke="#bbb" stroke-width="1.4"/></svg><svg style="position:absolute;left:1026.88px;top:589.05px" width="18" height="20" viewBox="0 0 18 20"><path d="M3.6 1.9h6.8l4.7 4.7v8.9c0 .9-.7 1.6-1.6 1.6H3.6c-.9 0-1.6-.7-1.6-1.6V3.5c0-.9.7-1.6 1.6-1.6z" fill="none" stroke="#111" stroke-width="1.6" stroke-linejoin="round"/><path d="M10.2 2.1v3.6c0 .6.4 1 1 1h3.7" fill="none" stroke="#111" stroke-width="1.3"/><path d="M4.6 9.7h2.6M10.6 9.7h1.4" stroke="#333" stroke-width="1"/><path d="M4.6 12h7.6" stroke="#777" stroke-width="1.1"/><path d="M4.6 14.2h1.8M10.4 14.2h1.6" stroke="#aaa" stroke-width=".9"/></svg><svg style="position:absolute;left:1071.96px;top:589.05px" width="18" height="20" viewBox="0 0 18 20"><path d="M3.6 1h9.9v2.4h-2v4l5.2 9.6H0.4l5.2-9.6v-4h-2z" fill="#050505"/><path d="M6.9 7.9L2.9 15.5h11.3l-4-7.6z" fill="#fff"/><circle cx="8.04" cy="10.95" r=".8" fill="#555"/><circle cx="9.84" cy="13.15" r="1.05" fill="#111"/></svg><svg style="position:absolute;left:1496.8px;top:591.9499999999999px" width="6" height="14" viewBox="0 0 6 14"><circle cx="3" cy="2.55" r="1.2" fill="#111"/><circle cx="3" cy="7" r="1.2" fill="#111"/><circle cx="3" cy="11.45" r="1.2" fill="#111"/></svg><div style="position:absolute;left:52px;top:626.7px;width:1464.6px;height:50.1px;background:#fff;border:1.5px solid #e3e4e7;border-left:none;border-radius:0 4px 4px 0;box-sizing:border-box"></div><div style="position:absolute;left:52px;top:627.0px;width:8px;height:49.5px;background:#de92ee"></div><div style="position:absolute;left:63.2px;top:630.8px;width:31.6px;height:35.5px;border:1px solid #e8e8e8;box-sizing:border-box;background:#fff"></div><svg style="position:absolute;left:64.60000000000001px;top:631.8px" width="29" height="34" viewBox="0 0 29 34"><defs><radialGradient id="sk" cx="0.5" cy="0.35" r="0.75"><stop offset="0" stop-color="#fde6cc"/><stop offset="0.55" stop-color="#ebbf98"/><stop offset="1" stop-color="#c48c62"/></radialGradient><linearGradient id="sh" x1="0" y1="0" x2="0" y2="1"><stop offset="0" stop-color="#eef9fd"/><stop offset="1" stop-color="#c4e3ef"/></linearGradient><linearGradient id="hr" x1="0" y1="0" x2="1" y2="1"><stop offset="0" stop-color="#7a4322"/><stop offset="1" stop-color="#3c1d0a"/></linearGradient></defs><path d="M1.4 32.2c-.4-7.4 3.4-12.2 9.2-14.4l3 1 3.4-1c6.2 2 10.6 6.6 10.2 14.4z" fill="url(#sh)"/><path d="M9.8 15.6h5.8v4l-2.9 2-2.9-2z" fill="#d7a078"/><ellipse cx="12.6" cy="10.6" rx="6.1" ry="8.6" fill="url(#sk)"/><path d="M6.4 9.6C5.6 3.4 8.4.3 12.8.3c4.4 0 7.4 2.8 6.8 8.4-.2 1.4-.6 2.2-1.2 2.8-.2-2.6-1-4.4-2.2-5.2-1.8 1-4.2 1.2-6.2.6-1.6.4-3 1.4-3.6 2.7z" fill="url(#hr)"/><path d="M10.4 21.6h3.2l-.6 11.2H8.6z" fill="#0a2650"/></svg><div style="position:absolute;left:98px;top:631.58px;font-size:11.7px;line-height:11.7px;color:#2fb3d2;font-weight:400;white-space:nowrap;transform:scaleX(0.9955);transform-origin:0 0;">MacDonald, Gabrielle</div><div style="position:absolute;left:98px;top:645.15px;font-size:7.4px;line-height:7.4px;color:#9a9a9a;font-weight:400;white-space:nowrap;transform:scaleX(1.1440);transform-origin:0 0;">F, 50Y</div><div style="position:absolute;left:98px;top:655.09px;font-size:7.6px;line-height:7.6px;color:#222;font-weight:400;white-space:nowrap;transform:scaleX(1.0970);transform-origin:0 0;">Omni Alpha Clinic</div><div style="position:absolute;left:98px;top:664.54px;font-size:7.9px;line-height:7.9px;color:#222;font-weight:400;white-space:nowrap;transform:scaleX(1.0384);transform-origin:0 0;">01:30 PM To 01:45 PM</div><div style="position:absolute;left:342.4px;top:644.1px;width:152px;height:24.2px;background:#fff;border:1px solid #c2c4c7;border-radius:3px 0 0 3px;box-sizing:border-box"></div><div style="position:absolute;left:494.3px;top:644.5px;width:18px;height:24.4px;background:#eceef0;border:1px solid #e0e2e4;border-left:none;border-radius:0 3px 3px 0;box-sizing:border-box"></div><div style="position:absolute;left:347.6px;top:652.03px;font-size:10.8px;line-height:10.8px;color:#383838;font-weight:400;white-space:nowrap;transform:scaleX(0.9249);transform-origin:0 0;">Grissom, Margaret</div><svg style="position:absolute;left:497px;top:649.9px" width="12" height="12" viewBox="0 0 12 12"><circle cx="5.2" cy="5.2" r="3.5" fill="none" stroke="#333" stroke-width="1.2"/><path d="M7.8 7.8l2.4 2.4" stroke="#333" stroke-width="1.4"/></svg><svg style="position:absolute;left:531.0px;top:645.65px" width="18" height="20" viewBox="0 0 18 20"><path d="M8.6 2.7c.8 0 1.4.5 1.4 1.2v.6c2.6.7 4 3 4 6v3.4l1.8 2.2V17H1.3v-.9l1.9-2.2v-3.4c0-3 1.4-5.3 4-6v-.6c0-.7.6-1.2 1.4-1.2z" fill="#111"/><rect x="7.6" y="7.8" width="2.2" height="6.2" fill="#fff"/><rect x="5.6" y="9.8" width="6.2" height="2.2" fill="#fff"/><rect x="7.5" y="17" width="2.2" height="2.5" rx=".6" fill="#111"/></svg><svg style="position:absolute;left:576.08px;top:645.65px" width="18" height="20" viewBox="0 0 18 20"><rect x="6.8" y="1.8" width="4.3" height="3.3" rx="1.3" fill="#8fd69b"/><path d="M6.8 4.6h4.3v2.3c0 1-.4 1.7-.9 2.3H7.7c-.5-.6-.9-1.3-.9-2.3z" fill="#20ba3b"/><path d="M7.2 9c-2.6.3-4.2 1.5-4.2 3.5v4.7h12.3v-4.7c0-2-1.6-3.2-4.2-3.5z" fill="#20ba3b"/><path d="M2.8 14.7l9.2-4.9" stroke="#fff" stroke-width="1"/><path d="M12.7 10.3l-3 7.2" stroke="#fff" stroke-width="1"/><path d="M7.4 15.4l2 2" stroke="#fff" stroke-width=".8"/></svg><svg style="position:absolute;left:621.16px;top:645.65px" width="18" height="20" viewBox="0 0 18 20"><polygon points="8.64,1.40 9.38,1.66 10.01,2.28 10.52,2.96 11.03,3.38 11.69,3.44 12.53,3.33 13.42,3.33 14.12,3.67 14.46,4.37 14.46,5.26 14.35,6.10 14.41,6.76 14.83,7.27 15.51,7.78 16.13,8.41 16.39,9.15 16.13,9.89 15.51,10.52 14.83,11.03 14.41,11.54 14.35,12.20 14.46,13.04 14.46,13.93 14.12,14.63 13.42,14.97 12.53,14.97 11.69,14.86 11.03,14.92 10.52,15.34 10.01,16.02 9.38,16.64 8.64,16.90 7.90,16.64 7.27,16.02 6.76,15.34 6.25,14.92 5.59,14.86 4.75,14.97 3.86,14.97 3.16,14.63 2.82,13.93 2.82,13.04 2.93,12.20 2.87,11.54 2.45,11.03 1.77,10.52 1.15,9.89 0.89,9.15 1.15,8.41 1.77,7.78 2.45,7.27 2.87,6.76 2.93,6.10 2.82,5.26 2.82,4.37 3.16,3.67 3.86,3.33 4.75,3.33 5.59,3.44 6.25,3.38 6.76,2.96 7.27,2.28 7.90,1.66" fill="none" stroke="#2a2a2a" stroke-width="1.15" stroke-linejoin="round"/><path d="M10.5 6.6c-.4-.7-1-1-1.9-1-1 0-1.8.6-1.8 1.5 0 2 3.8 1.4 3.8 3.6 0 1-.9 1.6-2 1.6-1 0-1.7-.4-2.1-1.1" fill="none" stroke="#111" stroke-width="1.3"/><path d="M8.6 4.6v1M8.6 12.3v1" stroke="#111" stroke-width="1.1"/></svg><svg style="position:absolute;left:666.24px;top:645.65px" width="18" height="20" viewBox="0 0 18 20"><circle cx="8.76" cy="9" r="8" fill="#050505"/><path d="M3.3 8.2l4.4 4.1 6.4-6.3" stroke="#fff" stroke-width="1.5" fill="none" stroke-linecap="round" stroke-linejoin="miter"/></svg><svg style="position:absolute;left:711.32px;top:645.65px" width="18" height="20" viewBox="0 0 18 20"><rect x="2.7" y="3.7" width="14.1" height="11.5" rx="2" fill="none" stroke="#2b2b2b" stroke-width="1.5"/><rect x="3.2" y="7.2" width="2.4" height="2.2" fill="#050505"/><rect x="13.8" y="7.2" width="2.4" height="2.2" fill="#050505"/><path d="M11.6 7.2c-.4-.7-1-1-1.8-1-1.3 0-2.2 1-2.2 2.4s.9 2.4 2.2 2.4c.8 0 1.4-.3 1.8-1" fill="none" stroke="#111" stroke-width="1.3"/><path d="M4.4 12.8h5" stroke="#9a9a9a" stroke-width=".8" stroke-dasharray="1 .6"/></svg><svg style="position:absolute;left:756.4px;top:645.65px" width="18" height="20" viewBox="0 0 18 20"><path d="M4.2 1.2h7.2l4.4 4.4v10c0 1.1-.9 2-2 2H4.2c-1.1 0-2-.9-2-2V3.2c0-1.1.9-2 2-2z" fill="none" stroke="#22bb44" stroke-width="1.7" stroke-linejoin="round"/><path d="M11.2 1.6v3.4c0 .5.3.8.8.8h3.4" fill="none" stroke="#22bb44" stroke-width="1.4"/><path d="M9.2 9.4h3.8M9.2 11.9h3.8" stroke="#3cc25a" stroke-width="1.1"/><path d="M9.2 14.3h3.8" stroke="#a9dcb4" stroke-width="1"/><path d="M6.6 8.2c-.6 0-1.2.4-1.2 1.1 0 1.4 2.4 1 2.4 2.6 0 .7-.6 1.1-1.2 1.1s-1.1-.3-1.3-.8M6.5 7.4v.8M6.5 13v.9" fill="none" stroke="#3cc25a" stroke-width=".9"/></svg><svg style="position:absolute;left:801.48px;top:645.65px" width="18" height="20" viewBox="0 0 18 20"><path d="M9 1.3C11 1.3 12 3.2 12.2 5.6 12.4 7.4 13.2 8.2 14.4 8.9 15.6 9.6 15.6 11.6 14 11.7 12.8 11.8 12 11.4 11.4 11 11 12.2 10 12.5 9 12.5S7 12.2 6.6 11C6 11.4 5.2 11.8 4 11.7 2.4 11.6 2.4 9.6 3.6 8.9 4.8 8.2 5.6 7.4 5.8 5.6 6 3.2 7 1.3 9 1.3z" fill="#050505"/><circle cx="2.3" cy="3.95" r="1.1" fill="#111"/><circle cx="15.8" cy="5.55" r="1.1" fill="#111"/><circle cx="2.3" cy="14.55" r="1.15" fill="#111"/><circle cx="6.8" cy="14.95" r=".95" fill="#555"/><circle cx="11.8" cy="14.95" r=".95" fill="#555"/><circle cx="9" cy="16.95" r=".9" fill="#666"/></svg><svg style="position:absolute;left:846.56px;top:645.65px" width="18" height="20" viewBox="0 0 18 20"><path d="M14.3 5.2A7.3 7.3 0 1 1 9.2 2.3" fill="none" stroke="#111" stroke-width="1.6"/><path d="M11.6 1.8l5 .1-1.4 4.4z" fill="#111"/><path d="M8.4 5.8v4.6h2.8" fill="none" stroke="#111" stroke-width="1.7"/></svg><svg style="position:absolute;left:891.64px;top:645.65px" width="18" height="20" viewBox="0 0 18 20"><path d="M8.66 2.1l6.2 2.3v4.8c0 3.8-2.6 6.6-6.2 7.8-3.6-1.2-6.2-4-6.2-7.8V4.4z" fill="#22bb44"/><path d="M5.2 10.3l2.2 2.1 4.6-4.9" stroke="#fff" stroke-width="1.6" fill="none"/></svg><svg style="position:absolute;left:936.72px;top:645.65px" width="18" height="20" viewBox="0 0 18 20"><circle cx="8.58" cy="9.35" r="7.5" fill="#fff" stroke="#050505" stroke-width="1.6"/><path d="M1.08 9.65h15a7.5 7.5 0 0 1-15 0z" fill="#050505"/></svg><svg style="position:absolute;left:981.8px;top:645.65px" width="18" height="20" viewBox="0 0 18 20"><path d="M3.6 1.8h6.8l4.8 4.8v8.8c0 .9-.7 1.6-1.6 1.6H3.6c-.9 0-1.6-.7-1.6-1.6V3.4c0-.9.7-1.6 1.6-1.6z" fill="none" stroke="#111" stroke-width="1.6" stroke-linejoin="round"/><path d="M10.2 2v3.6c0 .6.4 1 1 1h3.8" fill="none" stroke="#111" stroke-width="1.3"/><path d="M4.4 11.6h7.4" stroke="#888" stroke-width="1"/><path d="M4.8 14h7" stroke="#bbb" stroke-width="1.4"/></svg><svg style="position:absolute;left:1026.88px;top:645.65px" width="18" height="20" viewBox="0 0 18 20"><path d="M3.6 1.9h6.8l4.7 4.7v8.9c0 .9-.7 1.6-1.6 1.6H3.6c-.9 0-1.6-.7-1.6-1.6V3.5c0-.9.7-1.6 1.6-1.6z" fill="none" stroke="#111" stroke-width="1.6" stroke-linejoin="round"/><path d="M10.2 2.1v3.6c0 .6.4 1 1 1h3.7" fill="none" stroke="#111" stroke-width="1.3"/><path d="M4.6 9.7h2.6M10.6 9.7h1.4" stroke="#333" stroke-width="1"/><path d="M4.6 12h7.6" stroke="#777" stroke-width="1.1"/><path d="M4.6 14.2h1.8M10.4 14.2h1.6" stroke="#aaa" stroke-width=".9"/></svg><svg style="position:absolute;left:1071.96px;top:645.65px" width="18" height="20" viewBox="0 0 18 20"><path d="M3.6 1h9.9v2.4h-2v4l5.2 9.6H0.4l5.2-9.6v-4h-2z" fill="#050505"/><path d="M6.9 7.9L2.9 15.5h11.3l-4-7.6z" fill="#fff"/><circle cx="8.04" cy="10.95" r=".8" fill="#555"/><circle cx="9.84" cy="13.15" r="1.05" fill="#111"/></svg><svg style="position:absolute;left:1496.8px;top:647.55px" width="6" height="14" viewBox="0 0 6 14"><circle cx="3" cy="2.55" r="1.2" fill="#111"/><circle cx="3" cy="7" r="1.2" fill="#111"/><circle cx="3" cy="11.45" r="1.2" fill="#111"/></svg><div style="position:absolute;left:52px;top:681.3000000000001px;width:1464.6px;height:50.1px;background:#fff;border:1.5px solid #e3e4e7;border-left:none;border-radius:0 4px 4px 0;box-sizing:border-box"></div><div style="position:absolute;left:52px;top:681.6px;width:8px;height:49.5px;background:#de92ee"></div><div style="position:absolute;left:63.2px;top:685.4px;width:31.6px;height:35.5px;border:1px solid #e8e8e8;box-sizing:border-box;background:#fff"></div><svg style="position:absolute;left:64.60000000000001px;top:686.4px" width="29" height="34" viewBox="0 0 29 34"><defs><radialGradient id="sk" cx="0.5" cy="0.35" r="0.75"><stop offset="0" stop-color="#fde6cc"/><stop offset="0.55" stop-color="#ebbf98"/><stop offset="1" stop-color="#c48c62"/></radialGradient><linearGradient id="sh" x1="0" y1="0" x2="0" y2="1"><stop offset="0" stop-color="#eef9fd"/><stop offset="1" stop-color="#c4e3ef"/></linearGradient><linearGradient id="hr" x1="0" y1="0" x2="1" y2="1"><stop offset="0" stop-color="#7a4322"/><stop offset="1" stop-color="#3c1d0a"/></linearGradient></defs><path d="M1.4 32.2c-.4-7.4 3.4-12.2 9.2-14.4l3 1 3.4-1c6.2 2 10.6 6.6 10.2 14.4z" fill="url(#sh)"/><path d="M9.8 15.6h5.8v4l-2.9 2-2.9-2z" fill="#d7a078"/><ellipse cx="12.6" cy="10.6" rx="6.1" ry="8.6" fill="url(#sk)"/><path d="M6.4 9.6C5.6 3.4 8.4.3 12.8.3c4.4 0 7.4 2.8 6.8 8.4-.2 1.4-.6 2.2-1.2 2.8-.2-2.6-1-4.4-2.2-5.2-1.8 1-4.2 1.2-6.2.6-1.6.4-3 1.4-3.6 2.7z" fill="url(#hr)"/><path d="M10.4 21.6h3.2l-.6 11.2H8.6z" fill="#0a2650"/></svg><div style="position:absolute;left:98px;top:686.18px;font-size:11.7px;line-height:11.7px;color:#2fb3d2;font-weight:400;white-space:nowrap;transform:scaleX(0.9863);transform-origin:0 0;">Quinn, Piers</div><div style="position:absolute;left:98px;top:699.75px;font-size:7.4px;line-height:7.4px;color:#9a9a9a;font-weight:400;white-space:nowrap;transform:scaleX(1.0237);transform-origin:0 0;">M, 61Y</div><div style="position:absolute;left:98px;top:709.69px;font-size:7.6px;line-height:7.6px;color:#222;font-weight:400;white-space:nowrap;transform:scaleX(1.0970);transform-origin:0 0;">Omni Alpha Clinic</div><div style="position:absolute;left:98px;top:719.14px;font-size:7.9px;line-height:7.9px;color:#222;font-weight:400;white-space:nowrap;transform:scaleX(1.0384);transform-origin:0 0;">02:30 PM To 02:45 PM</div><div style="position:absolute;left:342.4px;top:698.7px;width:152px;height:24.2px;background:#fff;border:1px solid #c2c4c7;border-radius:3px 0 0 3px;box-sizing:border-box"></div><div style="position:absolute;left:494.3px;top:699.1px;width:18px;height:24.4px;background:#eceef0;border:1px solid #e0e2e4;border-left:none;border-radius:0 3px 3px 0;box-sizing:border-box"></div><div style="position:absolute;left:347.6px;top:706.63px;font-size:10.8px;line-height:10.8px;color:#383838;font-weight:400;white-space:nowrap;transform:scaleX(0.9249);transform-origin:0 0;">Grissom, Margaret</div><svg style="position:absolute;left:497px;top:704.5px" width="12" height="12" viewBox="0 0 12 12"><circle cx="5.2" cy="5.2" r="3.5" fill="none" stroke="#333" stroke-width="1.2"/><path d="M7.8 7.8l2.4 2.4" stroke="#333" stroke-width="1.4"/></svg><svg style="position:absolute;left:531.0px;top:699.0px" width="18" height="20" viewBox="0 0 18 20"><path d="M8.6 2.7c.8 0 1.4.5 1.4 1.2v.6c2.6.7 4 3 4 6v3.4l1.8 2.2V17H1.3v-.9l1.9-2.2v-3.4c0-3 1.4-5.3 4-6v-.6c0-.7.6-1.2 1.4-1.2z" fill="#111"/><rect x="7.6" y="7.8" width="2.2" height="6.2" fill="#fff"/><rect x="5.6" y="9.8" width="6.2" height="2.2" fill="#fff"/><rect x="7.5" y="17" width="2.2" height="2.5" rx=".6" fill="#111"/></svg><svg style="position:absolute;left:576.08px;top:699.0px" width="18" height="20" viewBox="0 0 18 20"><rect x="6.8" y="1.8" width="4.3" height="3.3" rx="1.3" fill="#8fd69b"/><path d="M6.8 4.6h4.3v2.3c0 1-.4 1.7-.9 2.3H7.7c-.5-.6-.9-1.3-.9-2.3z" fill="#20ba3b"/><path d="M7.2 9c-2.6.3-4.2 1.5-4.2 3.5v4.7h12.3v-4.7c0-2-1.6-3.2-4.2-3.5z" fill="#20ba3b"/><path d="M2.8 14.7l9.2-4.9" stroke="#fff" stroke-width="1"/><path d="M12.7 10.3l-3 7.2" stroke="#fff" stroke-width="1"/><path d="M7.4 15.4l2 2" stroke="#fff" stroke-width=".8"/></svg><svg style="position:absolute;left:621.16px;top:699.0px" width="18" height="20" viewBox="0 0 18 20"><polygon points="8.64,1.40 9.38,1.66 10.01,2.28 10.52,2.96 11.03,3.38 11.69,3.44 12.53,3.33 13.42,3.33 14.12,3.67 14.46,4.37 14.46,5.26 14.35,6.10 14.41,6.76 14.83,7.27 15.51,7.78 16.13,8.41 16.39,9.15 16.13,9.89 15.51,10.52 14.83,11.03 14.41,11.54 14.35,12.20 14.46,13.04 14.46,13.93 14.12,14.63 13.42,14.97 12.53,14.97 11.69,14.86 11.03,14.92 10.52,15.34 10.01,16.02 9.38,16.64 8.64,16.90 7.90,16.64 7.27,16.02 6.76,15.34 6.25,14.92 5.59,14.86 4.75,14.97 3.86,14.97 3.16,14.63 2.82,13.93 2.82,13.04 2.93,12.20 2.87,11.54 2.45,11.03 1.77,10.52 1.15,9.89 0.89,9.15 1.15,8.41 1.77,7.78 2.45,7.27 2.87,6.76 2.93,6.10 2.82,5.26 2.82,4.37 3.16,3.67 3.86,3.33 4.75,3.33 5.59,3.44 6.25,3.38 6.76,2.96 7.27,2.28 7.90,1.66" fill="none" stroke="#2a2a2a" stroke-width="1.15" stroke-linejoin="round"/><path d="M10.5 6.6c-.4-.7-1-1-1.9-1-1 0-1.8.6-1.8 1.5 0 2 3.8 1.4 3.8 3.6 0 1-.9 1.6-2 1.6-1 0-1.7-.4-2.1-1.1" fill="none" stroke="#111" stroke-width="1.3"/><path d="M8.6 4.6v1M8.6 12.3v1" stroke="#111" stroke-width="1.1"/></svg><svg style="position:absolute;left:666.24px;top:699.0px" width="18" height="20" viewBox="0 0 18 20"><circle cx="8.76" cy="9" r="8" fill="#050505"/><path d="M3.3 8.2l4.4 4.1 6.4-6.3" stroke="#fff" stroke-width="1.5" fill="none" stroke-linecap="round" stroke-linejoin="miter"/></svg><svg style="position:absolute;left:711.32px;top:699.0px" width="18" height="20" viewBox="0 0 18 20"><rect x="2.7" y="3.7" width="14.1" height="11.5" rx="2" fill="none" stroke="#2b2b2b" stroke-width="1.5"/><rect x="3.2" y="7.2" width="2.4" height="2.2" fill="#050505"/><rect x="13.8" y="7.2" width="2.4" height="2.2" fill="#050505"/><path d="M11.6 7.2c-.4-.7-1-1-1.8-1-1.3 0-2.2 1-2.2 2.4s.9 2.4 2.2 2.4c.8 0 1.4-.3 1.8-1" fill="none" stroke="#111" stroke-width="1.3"/><path d="M4.4 12.8h5" stroke="#9a9a9a" stroke-width=".8" stroke-dasharray="1 .6"/></svg><svg style="position:absolute;left:756.4px;top:699.0px" width="18" height="20" viewBox="0 0 18 20"><path d="M4.2 1.2h7.2l4.4 4.4v10c0 1.1-.9 2-2 2H4.2c-1.1 0-2-.9-2-2V3.2c0-1.1.9-2 2-2z" fill="none" stroke="#22bb44" stroke-width="1.7" stroke-linejoin="round"/><path d="M11.2 1.6v3.4c0 .5.3.8.8.8h3.4" fill="none" stroke="#22bb44" stroke-width="1.4"/><path d="M9.2 9.4h3.8M9.2 11.9h3.8" stroke="#3cc25a" stroke-width="1.1"/><path d="M9.2 14.3h3.8" stroke="#a9dcb4" stroke-width="1"/><path d="M6.6 8.2c-.6 0-1.2.4-1.2 1.1 0 1.4 2.4 1 2.4 2.6 0 .7-.6 1.1-1.2 1.1s-1.1-.3-1.3-.8M6.5 7.4v.8M6.5 13v.9" fill="none" stroke="#3cc25a" stroke-width=".9"/></svg><svg style="position:absolute;left:801.48px;top:699.0px" width="18" height="20" viewBox="0 0 18 20"><path d="M9 1.3C11 1.3 12 3.2 12.2 5.6 12.4 7.4 13.2 8.2 14.4 8.9 15.6 9.6 15.6 11.6 14 11.7 12.8 11.8 12 11.4 11.4 11 11 12.2 10 12.5 9 12.5S7 12.2 6.6 11C6 11.4 5.2 11.8 4 11.7 2.4 11.6 2.4 9.6 3.6 8.9 4.8 8.2 5.6 7.4 5.8 5.6 6 3.2 7 1.3 9 1.3z" fill="#050505"/><circle cx="2.3" cy="3.95" r="1.1" fill="#111"/><circle cx="15.8" cy="5.55" r="1.1" fill="#111"/><circle cx="2.3" cy="14.55" r="1.15" fill="#111"/><circle cx="6.8" cy="14.95" r=".95" fill="#555"/><circle cx="11.8" cy="14.95" r=".95" fill="#555"/><circle cx="9" cy="16.95" r=".9" fill="#666"/></svg><svg style="position:absolute;left:846.56px;top:699.0px" width="18" height="20" viewBox="0 0 18 20"><path d="M14.3 5.2A7.3 7.3 0 1 1 9.2 2.3" fill="none" stroke="#111" stroke-width="1.6"/><path d="M11.6 1.8l5 .1-1.4 4.4z" fill="#111"/><path d="M8.4 5.8v4.6h2.8" fill="none" stroke="#111" stroke-width="1.7"/></svg><svg style="position:absolute;left:891.64px;top:699.0px" width="18" height="20" viewBox="0 0 18 20"><path d="M8.66 2.1l6.2 2.3v4.8c0 3.8-2.6 6.6-6.2 7.8-3.6-1.2-6.2-4-6.2-7.8V4.4z" fill="#22bb44"/><path d="M5.2 10.3l2.2 2.1 4.6-4.9" stroke="#fff" stroke-width="1.6" fill="none"/></svg><svg style="position:absolute;left:936.72px;top:699.0px" width="18" height="20" viewBox="0 0 18 20"><circle cx="8.58" cy="9.35" r="7.5" fill="#fff" stroke="#050505" stroke-width="1.6"/><path d="M1.08 9.65h15a7.5 7.5 0 0 1-15 0z" fill="#050505"/></svg><svg style="position:absolute;left:981.8px;top:699.0px" width="18" height="20" viewBox="0 0 18 20"><path d="M3.6 1.8h6.8l4.8 4.8v8.8c0 .9-.7 1.6-1.6 1.6H3.6c-.9 0-1.6-.7-1.6-1.6V3.4c0-.9.7-1.6 1.6-1.6z" fill="none" stroke="#111" stroke-width="1.6" stroke-linejoin="round"/><path d="M10.2 2v3.6c0 .6.4 1 1 1h3.8" fill="none" stroke="#111" stroke-width="1.3"/><path d="M4.4 11.6h7.4" stroke="#888" stroke-width="1"/><path d="M4.8 14h7" stroke="#bbb" stroke-width="1.4"/></svg><svg style="position:absolute;left:1026.88px;top:699.0px" width="18" height="20" viewBox="0 0 18 20"><path d="M3.6 1.9h6.8l4.7 4.7v8.9c0 .9-.7 1.6-1.6 1.6H3.6c-.9 0-1.6-.7-1.6-1.6V3.5c0-.9.7-1.6 1.6-1.6z" fill="none" stroke="#111" stroke-width="1.6" stroke-linejoin="round"/><path d="M10.2 2.1v3.6c0 .6.4 1 1 1h3.7" fill="none" stroke="#111" stroke-width="1.3"/><path d="M4.6 9.7h2.6M10.6 9.7h1.4" stroke="#333" stroke-width="1"/><path d="M4.6 12h7.6" stroke="#777" stroke-width="1.1"/><path d="M4.6 14.2h1.8M10.4 14.2h1.6" stroke="#aaa" stroke-width=".9"/></svg><svg style="position:absolute;left:1071.96px;top:699.0px" width="18" height="20" viewBox="0 0 18 20"><path d="M3.6 1h9.9v2.4h-2v4l5.2 9.6H0.4l5.2-9.6v-4h-2z" fill="#050505"/><path d="M6.9 7.9L2.9 15.5h11.3l-4-7.6z" fill="#fff"/><circle cx="8.04" cy="10.95" r=".8" fill="#555"/><circle cx="9.84" cy="13.15" r="1.05" fill="#111"/></svg><svg style="position:absolute;left:1496.8px;top:702.15px" width="6" height="14" viewBox="0 0 6 14"><circle cx="3" cy="2.55" r="1.2" fill="#111"/><circle cx="3" cy="7" r="1.2" fill="#111"/><circle cx="3" cy="11.45" r="1.2" fill="#111"/></svg><div style="position:absolute;left:52px;top:736.7px;width:1464.6px;height:50.1px;background:#fff;border:1.5px solid #e3e4e7;border-left:none;border-radius:0 4px 4px 0;box-sizing:border-box"></div><div style="position:absolute;left:52px;top:737.0px;width:8px;height:49.5px;background:#76ee3e"></div><div style="position:absolute;left:63.2px;top:740.8px;width:31.6px;height:35.5px;border:1px solid #e8e8e8;box-sizing:border-box;background:#fff"></div><svg style="position:absolute;left:64.60000000000001px;top:741.8px" width="29" height="34" viewBox="0 0 29 34"><defs><radialGradient id="sk" cx="0.5" cy="0.35" r="0.75"><stop offset="0" stop-color="#fde6cc"/><stop offset="0.55" stop-color="#ebbf98"/><stop offset="1" stop-color="#c48c62"/></radialGradient><linearGradient id="sh" x1="0" y1="0" x2="0" y2="1"><stop offset="0" stop-color="#eef9fd"/><stop offset="1" stop-color="#c4e3ef"/></linearGradient><linearGradient id="hr" x1="0" y1="0" x2="1" y2="1"><stop offset="0" stop-color="#7a4322"/><stop offset="1" stop-color="#3c1d0a"/></linearGradient></defs><path d="M1.4 32.2c-.4-7.4 3.4-12.2 9.2-14.4l3 1 3.4-1c6.2 2 10.6 6.6 10.2 14.4z" fill="url(#sh)"/><path d="M9.8 15.6h5.8v4l-2.9 2-2.9-2z" fill="#d7a078"/><ellipse cx="12.6" cy="10.6" rx="6.1" ry="8.6" fill="url(#sk)"/><path d="M6.4 9.6C5.6 3.4 8.4.3 12.8.3c4.4 0 7.4 2.8 6.8 8.4-.2 1.4-.6 2.2-1.2 2.8-.2-2.6-1-4.4-2.2-5.2-1.8 1-4.2 1.2-6.2.6-1.6.4-3 1.4-3.6 2.7z" fill="url(#hr)"/><path d="M10.4 21.6h3.2l-.6 11.2H8.6z" fill="#0a2650"/></svg><div style="position:absolute;left:98px;top:741.58px;font-size:11.7px;line-height:11.7px;color:#2fb3d2;font-weight:400;white-space:nowrap;transform:scaleX(0.9574);transform-origin:0 0;">James, Matt</div><div style="position:absolute;left:98px;top:755.15px;font-size:7.4px;line-height:7.4px;color:#9a9a9a;font-weight:400;white-space:nowrap;transform:scaleX(1.0237);transform-origin:0 0;">M, 34Y</div><div style="position:absolute;left:98px;top:765.09px;font-size:7.6px;line-height:7.6px;color:#222;font-weight:400;white-space:nowrap;transform:scaleX(1.0970);transform-origin:0 0;">Omni Alpha Clinic</div><div style="position:absolute;left:98px;top:774.54px;font-size:7.9px;line-height:7.9px;color:#222;font-weight:400;white-space:nowrap;transform:scaleX(1.0384);transform-origin:0 0;">03:30 PM To 04:00 PM</div><div style="position:absolute;left:342.4px;top:754.1px;width:152px;height:24.2px;background:#fff;border:1px solid #c2c4c7;border-radius:3px 0 0 3px;box-sizing:border-box"></div><div style="position:absolute;left:494.3px;top:754.5px;width:18px;height:24.4px;background:#eceef0;border:1px solid #e0e2e4;border-left:none;border-radius:0 3px 3px 0;box-sizing:border-box"></div><div style="position:absolute;left:347.6px;top:762.03px;font-size:10.8px;line-height:10.8px;color:#383838;font-weight:400;white-space:nowrap;transform:scaleX(0.9249);transform-origin:0 0;">Grissom, Margaret</div><svg style="position:absolute;left:497px;top:759.9px" width="12" height="12" viewBox="0 0 12 12"><circle cx="5.2" cy="5.2" r="3.5" fill="none" stroke="#333" stroke-width="1.2"/><path d="M7.8 7.8l2.4 2.4" stroke="#333" stroke-width="1.4"/></svg><svg style="position:absolute;left:531.0px;top:754.05px" width="18" height="20" viewBox="0 0 18 20"><path d="M8.6 2.7c.8 0 1.4.5 1.4 1.2v.6c2.6.7 4 3 4 6v3.4l1.8 2.2V17H1.3v-.9l1.9-2.2v-3.4c0-3 1.4-5.3 4-6v-.6c0-.7.6-1.2 1.4-1.2z" fill="#111"/><rect x="7.6" y="7.8" width="2.2" height="6.2" fill="#fff"/><rect x="5.6" y="9.8" width="6.2" height="2.2" fill="#fff"/><rect x="7.5" y="17" width="2.2" height="2.5" rx=".6" fill="#111"/></svg><svg style="position:absolute;left:576.08px;top:754.05px" width="18" height="20" viewBox="0 0 18 20"><rect x="6.8" y="1.8" width="4.3" height="3.3" rx="1.3" fill="#8fd69b"/><path d="M6.8 4.6h4.3v2.3c0 1-.4 1.7-.9 2.3H7.7c-.5-.6-.9-1.3-.9-2.3z" fill="#20ba3b"/><path d="M7.2 9c-2.6.3-4.2 1.5-4.2 3.5v4.7h12.3v-4.7c0-2-1.6-3.2-4.2-3.5z" fill="#20ba3b"/><path d="M2.8 14.7l9.2-4.9" stroke="#fff" stroke-width="1"/><path d="M12.7 10.3l-3 7.2" stroke="#fff" stroke-width="1"/><path d="M7.4 15.4l2 2" stroke="#fff" stroke-width=".8"/></svg><svg style="position:absolute;left:621.16px;top:754.05px" width="18" height="20" viewBox="0 0 18 20"><polygon points="8.64,1.40 9.38,1.66 10.01,2.28 10.52,2.96 11.03,3.38 11.69,3.44 12.53,3.33 13.42,3.33 14.12,3.67 14.46,4.37 14.46,5.26 14.35,6.10 14.41,6.76 14.83,7.27 15.51,7.78 16.13,8.41 16.39,9.15 16.13,9.89 15.51,10.52 14.83,11.03 14.41,11.54 14.35,12.20 14.46,13.04 14.46,13.93 14.12,14.63 13.42,14.97 12.53,14.97 11.69,14.86 11.03,14.92 10.52,15.34 10.01,16.02 9.38,16.64 8.64,16.90 7.90,16.64 7.27,16.02 6.76,15.34 6.25,14.92 5.59,14.86 4.75,14.97 3.86,14.97 3.16,14.63 2.82,13.93 2.82,13.04 2.93,12.20 2.87,11.54 2.45,11.03 1.77,10.52 1.15,9.89 0.89,9.15 1.15,8.41 1.77,7.78 2.45,7.27 2.87,6.76 2.93,6.10 2.82,5.26 2.82,4.37 3.16,3.67 3.86,3.33 4.75,3.33 5.59,3.44 6.25,3.38 6.76,2.96 7.27,2.28 7.90,1.66" fill="none" stroke="#2a2a2a" stroke-width="1.15" stroke-linejoin="round"/><path d="M10.5 6.6c-.4-.7-1-1-1.9-1-1 0-1.8.6-1.8 1.5 0 2 3.8 1.4 3.8 3.6 0 1-.9 1.6-2 1.6-1 0-1.7-.4-2.1-1.1" fill="none" stroke="#111" stroke-width="1.3"/><path d="M8.6 4.6v1M8.6 12.3v1" stroke="#111" stroke-width="1.1"/></svg><svg style="position:absolute;left:666.24px;top:754.05px" width="18" height="20" viewBox="0 0 18 20"><circle cx="8.76" cy="9" r="8" fill="#050505"/><path d="M3.3 8.2l4.4 4.1 6.4-6.3" stroke="#fff" stroke-width="1.5" fill="none" stroke-linecap="round" stroke-linejoin="miter"/></svg><svg style="position:absolute;left:711.32px;top:754.05px" width="18" height="20" viewBox="0 0 18 20"><rect x="2.7" y="3.7" width="14.1" height="11.5" rx="2" fill="none" stroke="#2b2b2b" stroke-width="1.5"/><rect x="3.2" y="7.2" width="2.4" height="2.2" fill="#050505"/><rect x="13.8" y="7.2" width="2.4" height="2.2" fill="#050505"/><path d="M11.6 7.2c-.4-.7-1-1-1.8-1-1.3 0-2.2 1-2.2 2.4s.9 2.4 2.2 2.4c.8 0 1.4-.3 1.8-1" fill="none" stroke="#111" stroke-width="1.3"/><path d="M4.4 12.8h5" stroke="#9a9a9a" stroke-width=".8" stroke-dasharray="1 .6"/></svg><svg style="position:absolute;left:756.4px;top:754.05px" width="18" height="20" viewBox="0 0 18 20"><path d="M4.2 1.2h7.2l4.4 4.4v10c0 1.1-.9 2-2 2H4.2c-1.1 0-2-.9-2-2V3.2c0-1.1.9-2 2-2z" fill="none" stroke="#22bb44" stroke-width="1.7" stroke-linejoin="round"/><path d="M11.2 1.6v3.4c0 .5.3.8.8.8h3.4" fill="none" stroke="#22bb44" stroke-width="1.4"/><path d="M9.2 9.4h3.8M9.2 11.9h3.8" stroke="#3cc25a" stroke-width="1.1"/><path d="M9.2 14.3h3.8" stroke="#a9dcb4" stroke-width="1"/><path d="M6.6 8.2c-.6 0-1.2.4-1.2 1.1 0 1.4 2.4 1 2.4 2.6 0 .7-.6 1.1-1.2 1.1s-1.1-.3-1.3-.8M6.5 7.4v.8M6.5 13v.9" fill="none" stroke="#3cc25a" stroke-width=".9"/></svg><svg style="position:absolute;left:801.48px;top:754.05px" width="18" height="20" viewBox="0 0 18 20"><path d="M9 1.3C11 1.3 12 3.2 12.2 5.6 12.4 7.4 13.2 8.2 14.4 8.9 15.6 9.6 15.6 11.6 14 11.7 12.8 11.8 12 11.4 11.4 11 11 12.2 10 12.5 9 12.5S7 12.2 6.6 11C6 11.4 5.2 11.8 4 11.7 2.4 11.6 2.4 9.6 3.6 8.9 4.8 8.2 5.6 7.4 5.8 5.6 6 3.2 7 1.3 9 1.3z" fill="#050505"/><circle cx="2.3" cy="3.95" r="1.1" fill="#111"/><circle cx="15.8" cy="5.55" r="1.1" fill="#111"/><circle cx="2.3" cy="14.55" r="1.15" fill="#111"/><circle cx="6.8" cy="14.95" r=".95" fill="#555"/><circle cx="11.8" cy="14.95" r=".95" fill="#555"/><circle cx="9" cy="16.95" r=".9" fill="#666"/></svg><svg style="position:absolute;left:846.56px;top:754.05px" width="18" height="20" viewBox="0 0 18 20"><path d="M14.3 5.2A7.3 7.3 0 1 1 9.2 2.3" fill="none" stroke="#111" stroke-width="1.6"/><path d="M11.6 1.8l5 .1-1.4 4.4z" fill="#111"/><path d="M8.4 5.8v4.6h2.8" fill="none" stroke="#111" stroke-width="1.7"/></svg><svg style="position:absolute;left:891.64px;top:754.05px" width="18" height="20" viewBox="0 0 18 20"><path d="M8.66 2.1l6.2 2.3v4.8c0 3.8-2.6 6.6-6.2 7.8-3.6-1.2-6.2-4-6.2-7.8V4.4z" fill="#22bb44"/><path d="M5.2 10.3l2.2 2.1 4.6-4.9" stroke="#fff" stroke-width="1.6" fill="none"/></svg><svg style="position:absolute;left:936.72px;top:754.05px" width="18" height="20" viewBox="0 0 18 20"><circle cx="8.58" cy="9.35" r="7.5" fill="#fff" stroke="#050505" stroke-width="1.6"/><path d="M1.08 9.65h15a7.5 7.5 0 0 1-15 0z" fill="#050505"/></svg><svg style="position:absolute;left:981.8px;top:754.05px" width="18" height="20" viewBox="0 0 18 20"><path d="M3.6 1.8h6.8l4.8 4.8v8.8c0 .9-.7 1.6-1.6 1.6H3.6c-.9 0-1.6-.7-1.6-1.6V3.4c0-.9.7-1.6 1.6-1.6z" fill="none" stroke="#111" stroke-width="1.6" stroke-linejoin="round"/><path d="M10.2 2v3.6c0 .6.4 1 1 1h3.8" fill="none" stroke="#111" stroke-width="1.3"/><path d="M4.4 11.6h7.4" stroke="#888" stroke-width="1"/><path d="M4.8 14h7" stroke="#bbb" stroke-width="1.4"/></svg><svg style="position:absolute;left:1026.88px;top:754.05px" width="18" height="20" viewBox="0 0 18 20"><path d="M3.6 1.9h6.8l4.7 4.7v8.9c0 .9-.7 1.6-1.6 1.6H3.6c-.9 0-1.6-.7-1.6-1.6V3.5c0-.9.7-1.6 1.6-1.6z" fill="none" stroke="#111" stroke-width="1.6" stroke-linejoin="round"/><path d="M10.2 2.1v3.6c0 .6.4 1 1 1h3.7" fill="none" stroke="#111" stroke-width="1.3"/><path d="M4.6 9.7h2.6M10.6 9.7h1.4" stroke="#333" stroke-width="1"/><path d="M4.6 12h7.6" stroke="#777" stroke-width="1.1"/><path d="M4.6 14.2h1.8M10.4 14.2h1.6" stroke="#aaa" stroke-width=".9"/></svg><svg style="position:absolute;left:1071.96px;top:754.05px" width="18" height="20" viewBox="0 0 18 20"><path d="M3.6 1h9.9v2.4h-2v4l5.2 9.6H0.4l5.2-9.6v-4h-2z" fill="#050505"/><path d="M6.9 7.9L2.9 15.5h11.3l-4-7.6z" fill="#fff"/><circle cx="8.04" cy="10.95" r=".8" fill="#555"/><circle cx="9.84" cy="13.15" r="1.05" fill="#111"/></svg><svg style="position:absolute;left:1496.8px;top:757.55px" width="6" height="14" viewBox="0 0 6 14"><circle cx="3" cy="2.55" r="1.2" fill="#111"/><circle cx="3" cy="7" r="1.2" fill="#111"/><circle cx="3" cy="11.45" r="1.2" fill="#111"/></svg><div style="position:absolute;left:51.3px;top:787.0px;width:1469px;height:4.4px;background:#fbfbfc"></div><div style="position:absolute;left:51.3px;top:791.4px;width:1464.7px;height:19px;background:#effafd"></div><div style="position:absolute;left:746.5px;top:798.23px;font-size:9.6px;line-height:9.6px;color:#333;font-weight:700;white-space:nowrap;transform:scaleX(0.9119);transform-origin:0 0;">CHECK-IN</div><div style="position:absolute;left:799.8px;top:798.3px;width:22px;height:11px;background:#ececec;border:1px solid #d8d8d8;border-radius:6px;box-sizing:border-box"></div><svg style="position:absolute;left:799.8px;top:798.3px" width="22" height="11" viewBox="0 0 22 11"><path d="M7 4v4.4L10.7 6.2zM15.7 4v4.4L12.2 6.2z" fill="#111"/></svg><div style="position:absolute;left:51.3px;top:810.4px;width:1469px;height:56px;background:#fdfdfd"></div></div></div></body></html>
